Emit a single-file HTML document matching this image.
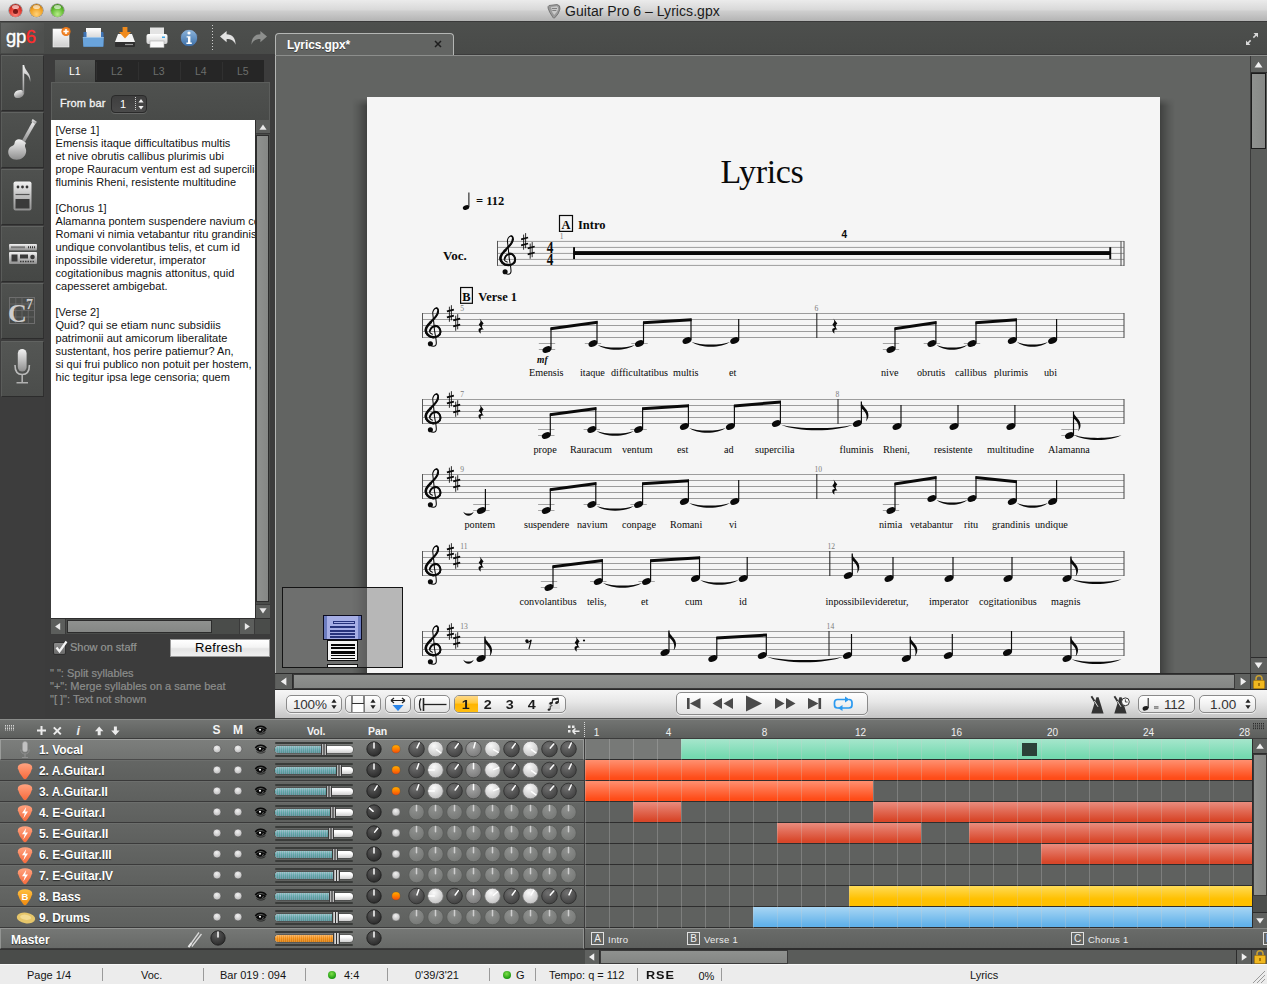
<!DOCTYPE html>
<html lang="en"><head><meta charset="utf-8"><title>Guitar Pro 6 – Lyrics.gpx</title>
<style>
*{box-sizing:border-box;margin:0;padding:0}
html,body{width:1267px;height:984px;overflow:hidden;background:#3c3c3c}
body{position:relative;font-family:"Liberation Sans","DejaVu Sans",sans-serif;font-size:11px;color:#fff}
.a{position:absolute}
svg{position:absolute;overflow:visible}
.t{position:absolute;white-space:pre;line-height:1}
</style></head>
<body>
<div class="a" style="left:0px;top:0px;width:1267px;height:22px;background:linear-gradient(#ebebeb,#d9d9d9 45%,#cdcdcd 55%,#b4b4b4);border-bottom:1px solid #3a3a3a"></div>
<div class="a" style="left:8.5px;top:4px;width:13px;height:13px;border-radius:50%;background:radial-gradient(circle at 50% 78%,#ff8a80 0,#e0362c 55%,#8a1a14 100%);box-shadow:0 0 0 .5px rgba(0,0,0,.45),0 1px 0 rgba(255,255,255,.5)"><div class="a" style="left:3px;top:1px;width:7px;height:4px;border-radius:50%;background:rgba(255,255,255,.6)"></div><div class="a" style="left:4px;top:4.5px;width:5px;height:5px;border-radius:50%;background:rgba(90,8,8,.8)"></div></div>
<div class="a" style="left:29.5px;top:4px;width:13px;height:13px;border-radius:50%;background:radial-gradient(circle at 50% 78%,#ffd27a 0,#f0a020 55%,#9a5a08 100%);box-shadow:0 0 0 .5px rgba(0,0,0,.45),0 1px 0 rgba(255,255,255,.5)"><div class="a" style="left:3px;top:1px;width:7px;height:4px;border-radius:50%;background:rgba(255,255,255,.6)"></div></div>
<div class="a" style="left:50.5px;top:4px;width:13px;height:13px;border-radius:50%;background:radial-gradient(circle at 50% 78%,#b8ec8a 0,#5cb82c 55%,#2c6a10 100%);box-shadow:0 0 0 .5px rgba(0,0,0,.45),0 1px 0 rgba(255,255,255,.5)"><div class="a" style="left:3px;top:1px;width:7px;height:4px;border-radius:50%;background:rgba(255,255,255,.6)"></div></div>
<svg style="left:546px;top:3px" width="16" height="16" viewBox="0 0 16 16"><path d="M3 2.5 L11 1.5 Q14.5 2 14 6 Q13 11 8.5 15 Q7.5 15.5 7 14.5 Q3 9 2 5 Q1.8 3 3 2.5Z" fill="#9a9a9a" stroke="#6a6a6a" stroke-width=".8"/><path d="M5 4 L11 3.3 Q12.5 4 12 6.5 Q11 9.5 8.2 12 Q5.5 9 5 4Z" fill="#c9c9c9"/><path d="M6 5.5 h5 M6.3 7.5 h4" stroke="#777" stroke-width=".9"/></svg>
<div class="t" style="left:565px;top:3px;font-size:14px;color:#1a1a1a;letter-spacing:.05px;line-height:16px">Guitar Pro 6 – Lyrics.gpx</div>
<div class="a" style="left:0px;top:22px;width:1267px;height:32px;background:linear-gradient(#4d4f4d,#484a48)"></div>
<div class="a" style="left:1px;top:23px;width:43px;height:30px;background:linear-gradient(135deg,#646664,#4e504e 70%)"></div>
<div class="t" style="left:6px;top:27px;font-size:18.5px;letter-spacing:-.4px;line-height:20px;color:#fff;-webkit-text-stroke:.35px">gp<span style="color:#ff2d2d">6</span></div>
<svg style="left:50px;top:25px" width="24" height="26" viewBox="50 25 24 26"><defs><linearGradient id="pg" x1="0" y1="0" x2="0" y2="1"><stop offset="0" stop-color="#fff"/><stop offset="1" stop-color="#cfcfcf"/></linearGradient><radialGradient id="og"><stop offset="0" stop-color="#ffb060"/><stop offset="1" stop-color="#e87010"/></radialGradient></defs><rect x="53" y="29" width="16" height="18" fill="url(#pg)" stroke="#f4f4f4" stroke-width=".6"/><circle cx="66" cy="31.5" r="4.6" fill="url(#og)"/><path d="M63.4 31.5h5.2M66 28.9v5.2" stroke="#fff" stroke-width="1.6"/></svg>
<svg style="left:80px;top:25px" width="28" height="26" viewBox="80 25 28 26"><rect x="86" y="28" width="15" height="12" fill="url(#pg)"/><path d="M83.5 32 h3 v9 h14.5 v-9 h2 l.5 1 v13.5 h-20z" fill="#3d73b5"/><path d="M82.8 37.5 h21 l-.6 9.3 h-19.8z" fill="#6aa4dc"/><path d="M82.8 37.5 h21" stroke="#9cc6ee" stroke-width=".8"/></svg>
<svg style="left:112px;top:25px" width="28" height="26" viewBox="112 25 28 26"><path d="M118 34 h14 l3 8 h-20z" fill="#f4f4f4"/><rect x="115" y="42" width="20" height="5" rx="1" fill="#2f2f2f"/><path d="M125 44.5h8" stroke="#999" stroke-width="1.2"/><path d="M122.6 27 h4.8 v5 h3.6 l-6 6.4 l-6 -6.4 h3.6z" fill="#f08a1c"/></svg>
<svg style="left:143px;top:25px" width="28" height="26" viewBox="143 25 28 26"><rect x="150" y="27.5" width="14" height="8" fill="#e4e4e4"/><rect x="146.5" y="34" width="21" height="10" rx="2" fill="url(#pg)"/><rect x="150" y="41" width="14" height="6.5" fill="#fafafa" stroke="#aaa" stroke-width=".6"/><rect x="162" y="36.5" width="3" height="1.5" fill="#3aa6e8"/></svg>
<svg style="left:178px;top:27px" width="22" height="22" viewBox="0 0 22 22"><defs><linearGradient id="ig" x1="0" y1="0" x2="0" y2="1"><stop offset="0" stop-color="#8fb6dc"/><stop offset="1" stop-color="#3a6ea8"/></linearGradient></defs><circle cx="11" cy="11" r="8.7" fill="url(#ig)" stroke="#4a4440" stroke-width=".8"/><circle cx="11" cy="6" r="1.6" fill="#fff"/><path d="M8.6 9.2h3.8v6.4h1.4v1.4H8.4v-1.4h1.6v-5H8.6z" fill="#fff"/></svg>
<div class="a" style="left:212px;top:25px;width:1px;height:26px;background:repeating-linear-gradient(#cfcfcf 0 1px,transparent 1px 3px)"></div>
<svg style="left:218.5px;top:29.5px" width="19" height="17" viewBox="0 0 20 18"><path d="M1 6.8 L8 1 V4.6 C14 4.6 17.5 8.5 17.5 15.5 C15.8 11.5 13 9.6 8 9.6 V13z" fill="#e2e2e2"/></svg>
<svg style="left:248.5px;top:29.5px" width="19" height="17" viewBox="0 0 20 18"><path d="M19 6.8 L12 1 V4.6 C6 4.6 2.5 8.5 2.5 15.5 C4.2 11.5 7 9.6 12 9.6 V13z" fill="#8d8f8d"/></svg>
<svg style="left:1245px;top:32px" width="14" height="14" viewBox="0 0 14 14"><path d="M8.5 1H13V5.5L11.3 3.8 8.9 6.2 7.8 5.1 10.2 2.7zM5.5 13H1V8.5L2.7 10.2 5.1 7.8 6.2 8.9 3.8 11.3z" fill="#d8d8d8"/></svg>
<div class="a" style="left:275px;top:33px;width:179px;height:23px;background:#626462;border:1px solid #b4b6b4;border-bottom:none;border-radius:4px 4px 0 0"></div>
<div class="t" style="left:287px;top:38px;font-size:12px;font-weight:bold;line-height:14px;letter-spacing:-.1px;text-shadow:0 1px 0 rgba(0,0,0,.4)">Lyrics.gpx*</div>
<svg style="left:434px;top:40px" width="8" height="8" viewBox="0 0 8 8"><path d="M1 1L7 7M7 1L1 7" stroke="#1e1e1e" stroke-width="1.5"/></svg>
<div class="a" style="left:0px;top:54px;width:45px;height:664px;background:#3d3d3d"></div>
<div class="a" style="left:1px;top:55px;width:43px;height:56px;background:linear-gradient(#4f514f,#454745);border-top:1px solid #616361;border-left:1px solid #5a5c5a;border-bottom:1px solid #2c2c2c;border-right:1px solid #2f2f2f"></div>
<svg style="left:0;top:54px" width="44" height="57" viewBox="0 0 44 57"><defs><linearGradient id="sg" x1="0" y1="0" x2="0" y2="1"><stop offset="0" stop-color="#f2f2f2"/><stop offset="1" stop-color="#8e8e8e"/></linearGradient></defs><ellipse cx="19" cy="40" rx="5.2" ry="3.8" transform="rotate(-25 19 40)" fill="url(#sg)"/><path d="M22.6 39.5 V11 h1.6 c0.5 6 7.5 8 6 17 c-.6 -6 -4 -8 -6 -8.5 V39.5z" fill="url(#sg)"/></svg>
<div class="a" style="left:1px;top:112px;width:43px;height:56px;background:linear-gradient(#4f514f,#454745);border-top:1px solid #616361;border-left:1px solid #5a5c5a;border-bottom:1px solid #2c2c2c;border-right:1px solid #2f2f2f"></div>
<svg style="left:0;top:111px" width="44" height="57" viewBox="0 0 44 57"><path d="M33.2 9.2 L36.2 11.2 L24.8 31.2 L22 29.5Z" fill="url(#sg)"/><path d="M32.6 8 L36.8 10.8 L35.6 13.2 L31.4 10.4Z" fill="url(#sg)"/><path d="M21.5 28.8 C18.5 27.2 14.6 28.8 14.6 32 C14.6 34 12.6 34.6 11 35.6 C7.4 38 7.4 43.6 10.5 46.6 C13.6 49.6 19.6 49.6 23 46.6 C26 44 27 40 25.5 37 C24.5 35 25 33 26.2 32 Z" fill="url(#sg)"/></svg>
<div class="a" style="left:1px;top:169px;width:43px;height:56px;background:linear-gradient(#4f514f,#454745);border-top:1px solid #616361;border-left:1px solid #5a5c5a;border-bottom:1px solid #2c2c2c;border-right:1px solid #2f2f2f"></div>
<svg style="left:0;top:168px" width="44" height="57" viewBox="0 0 44 57"><rect x="13.5" y="13.5" width="18" height="29" rx="2" fill="url(#sg)"/><rect x="15.5" y="31" width="14" height="9.5" fill="#3a3a3a"/><circle cx="18" cy="19" r="1.4" fill="#333"/><circle cx="22.5" cy="19" r="1.4" fill="#333"/><circle cx="27" cy="19" r="1.4" fill="#333"/><path d="M15.5 26.5h14" stroke="#555" stroke-width="1.2"/></svg>
<div class="a" style="left:1px;top:226px;width:43px;height:56px;background:linear-gradient(#4f514f,#454745);border-top:1px solid #616361;border-left:1px solid #5a5c5a;border-bottom:1px solid #2c2c2c;border-right:1px solid #2f2f2f"></div>
<svg style="left:0;top:225px" width="44" height="57" viewBox="0 0 44 57"><rect x="9" y="19" width="28" height="6.5" rx="1" fill="url(#sg)"/><rect x="9" y="27" width="28" height="12" rx="1" fill="url(#sg)"/><path d="M11.5 22.2h14M28 22.2h7" stroke="#333" stroke-width="2" stroke-dasharray="1 1"/><rect x="11.5" y="29.5" width="6" height="7" fill="#3a3a3a"/><rect x="20" y="29.5" width="8" height="4" fill="#3a3a3a"/><circle cx="32.5" cy="32" r="2.3" fill="#3a3a3a"/><path d="M20 36.5h14" stroke="#3a3a3a" stroke-width="1.6" stroke-dasharray="1.5 1"/></svg>
<div class="a" style="left:1px;top:283px;width:43px;height:56px;background:linear-gradient(#4f514f,#454745);border-top:1px solid #616361;border-left:1px solid #5a5c5a;border-bottom:1px solid #2c2c2c;border-right:1px solid #2f2f2f"></div>
<svg style="left:0;top:282px" width="44" height="57" viewBox="0 0 44 57"><rect x="9.5" y="15.5" width="25" height="26" fill="none" stroke="#6e6e6e"/><path d="M9.5 22h25M9.5 28.5h25M9.5 35h25M15.8 15.5v26M22 15.5v26M28.3 15.5v26" stroke="#6a6a6a" stroke-width=".8"/><text x="8" y="39.5" font-family='"Liberation Serif", "DejaVu Serif", serif' font-weight="bold" font-size="26" fill="#cdcdcd">C</text><text x="26" y="26.5" font-family='"Liberation Serif", "DejaVu Serif", serif' font-weight="bold" font-size="14" fill="#cdcdcd">7</text></svg>
<div class="a" style="left:1px;top:341px;width:43px;height:56px;background:linear-gradient(#545654,#4b4d4b);border-top:1px solid #616361;border-left:1px solid #5a5c5a;border-bottom:1px solid #2c2c2c;border-right:1px solid #2f2f2f"></div>
<svg style="left:0;top:340px" width="44" height="57" viewBox="0 0 44 57"><rect x="17.8" y="9" width="8.8" height="22.5" rx="4.4" fill="url(#sg)"/><path d="M15 25 c0 6.5 3 9.5 7.2 9.5 s7.2 -3 7.2 -9.5" fill="none" stroke="#bcbcbc" stroke-width="1.6"/><path d="M22.2 34.5v8M16.5 42.8h11.5" stroke="#b0b0b0" stroke-width="1.6"/></svg>
<div class="a" style="left:55px;top:60px;width:209px;height:22px;background:#262626"></div>
<div class="a" style="left:55px;top:60px;width:40px;height:22px;background:linear-gradient(#5a5c5a,#4c4e4c)"></div>
<div class="t" style="left:69px;top:64.5px;font-size:10.5px;color:#fff;line-height:12px">L1</div>
<div class="a" style="left:96px;top:62px;width:1px;height:18px;background:#303030"></div>
<div class="t" style="left:111px;top:64.5px;font-size:10.5px;color:#6c6e6c;line-height:12px">L2</div>
<div class="a" style="left:138px;top:62px;width:1px;height:18px;background:#303030"></div>
<div class="t" style="left:153px;top:64.5px;font-size:10.5px;color:#6c6e6c;line-height:12px">L3</div>
<div class="a" style="left:180px;top:62px;width:1px;height:18px;background:#303030"></div>
<div class="t" style="left:195px;top:64.5px;font-size:10.5px;color:#6c6e6c;line-height:12px">L4</div>
<div class="a" style="left:222px;top:62px;width:1px;height:18px;background:#303030"></div>
<div class="t" style="left:237px;top:64.5px;font-size:10.5px;color:#6c6e6c;line-height:12px">L5</div>
<div class="a" style="left:51px;top:82px;width:219px;height:552px;background:linear-gradient(#4f514f,#484a48 40px);border:1px solid #5c5e5c;border-bottom-color:#3a3a3a"></div>
<div class="t" style="left:60px;top:97px;font-size:11px;-webkit-text-stroke:.3px #f4f4f4;letter-spacing:.1px;line-height:13px;color:#f4f4f4">From bar</div>
<div class="a" style="left:111px;top:95px;width:36px;height:18px;background:linear-gradient(#3e3e3e,#4a4a4a);border:1px solid #2a2a2a;border-radius:4px;box-shadow:0 1px 0 rgba(255,255,255,.15)"></div>
<div class="t" style="left:120px;top:98px;font-size:11px;line-height:13px;color:#fff">1</div>
<div class="a" style="left:135px;top:97px;width:1px;height:14px;background:repeating-linear-gradient(#d0d0d0 0 1px,transparent 1px 2px)"></div>
<svg style="left:137px;top:96px" width="8" height="16" viewBox="0 0 8 16"><polygon points="1.4,6.5600000000000005 6.6,6.5600000000000005 4,2.92" fill="#f0f0f0"/><polygon points="1.4,9.94 6.6,9.94 4,13.58" fill="#f0f0f0"/></svg>
<div class="a" style="left:51px;top:120px;width:204px;height:498px;background:#fff;overflow:hidden"><div style="position:absolute;left:4.5px;top:3.5px;font-size:11px;line-height:13px;color:#111;white-space:pre;letter-spacing:.04px">[Verse 1]
Emensis itaque difficultatibus multis
et nive obrutis callibus plurimis ubi
prope Rauracum ventum est ad supercilia
fluminis Rheni, resistente multitudine

[Chorus 1]
Alamanna pontem suspendere navium conpage
Romani vi nimia vetabantur ritu grandinis
undique convolantibus telis, et cum id
inpossibile videretur, imperator
cogitationibus magnis attonitus, quid
capesseret ambigebat.

[Verse 2]
Quid? qui se etiam nunc subsidiis
patrimonii aut amicorum liberalitate
sustentant, hos perire patiemur? An,
si qui frui publico non potuit per hostem,
hic tegitur ipsa lege censoria; quem</div></div>
<div class="a" style="left:255px;top:120px;width:15px;height:498px;background:#4a4c4a;border-left:1px solid #2e2e2e"></div>
<div class="a" style="left:256px;top:120px;width:14px;height:14px;background:#5c5e5c;border-bottom:1px solid #3a3a3a"></div>
<div class="a" style="left:256px;top:135px;width:13px;height:467px;background:linear-gradient(90deg,#8f918f,#858785);border:1px solid #2c2c2c"></div>
<div class="a" style="left:256px;top:604px;width:14px;height:14px;background:#5c5e5c;border-top:1px solid #3a3a3a"></div>
<svg style="left:256px;top:120px" width="14" height="498" viewBox="0 0 14 498"><polygon points="3.4,9.66 10.6,9.66 7,4.619999999999999" fill="#eaeaea"/><polygon points="3.4,488.34 10.6,488.34 7,493.38" fill="#eaeaea"/></svg>
<div class="a" style="left:51px;top:618px;width:219px;height:16px;background:#4a4c4a;border-top:1px solid #2e2e2e"></div>
<div class="a" style="left:51px;top:619px;width:15px;height:15px;background:#5c5e5c;border-right:1px solid #3a3a3a"></div>
<div class="a" style="left:67px;top:620px;width:145px;height:13px;background:linear-gradient(#8f918f,#858785);border:1px solid #2c2c2c"></div>
<div class="a" style="left:239px;top:619px;width:16px;height:15px;background:#5c5e5c;border-left:1px solid #3a3a3a;border-right:1px solid #3a3a3a"></div>
<svg style="left:51px;top:619px" width="204" height="15" viewBox="0 0 204 15"><polygon points="9.16,3.9 9.16,11.1 4.119999999999999,7.5" fill="#eaeaea"/><polygon points="193.84,3.9 193.84,11.1 198.88,7.5" fill="#eaeaea"/></svg>
<div class="a" style="left:53px;top:642px;width:13px;height:13px;background:linear-gradient(#8a8a8a,#6a6a6a);border:1px solid #2e2e2e;border-radius:2px"></div>
<svg style="left:53px;top:638px" width="18" height="18" viewBox="0 0 18 18"><path d="M3.5 9.5 L6.5 13.5 L13.5 3.5" fill="none" stroke="#f4f4f4" stroke-width="2.2"/></svg>
<div class="t" style="left:70px;top:641px;font-size:11px;line-height:13px;color:#939593;-webkit-text-stroke:.2px #939593">Show on staff</div>
<div class="a" style="left:170px;top:639px;width:100px;height:18px;background:linear-gradient(#ffffff,#f4f4f4 45%,#e4e4e4 55%,#f0f0f0);border:1px solid #9a9a9a"></div>
<div class="t" style="left:195px;top:640px;font-size:13px;line-height:16px;color:#000;letter-spacing:.3px">Refresh</div>
<div class="t" style="left:50px;top:667px;font-size:11px;line-height:13px;color:#8c8e8c;-webkit-text-stroke:.2px #8c8e8c">" ": Split syllables</div>
<div class="t" style="left:50px;top:680px;font-size:11px;line-height:13px;color:#8c8e8c;-webkit-text-stroke:.2px #8c8e8c">"+": Merge syllables on a same beat</div>
<div class="t" style="left:50px;top:693px;font-size:11px;line-height:13px;color:#8c8e8c;-webkit-text-stroke:.2px #8c8e8c">"[ ]": Text not shown</div>
<div class="a" style="left:275px;top:55px;width:977px;height:618px;background:#626462;border-left:1px solid #b4b6b4;border-top:1px solid #8c8e8c"></div>
<div class="a" style="left:454px;top:55px;width:813px;height:1px;background:#8c8e8c"></div>
<div class="a" style="left:352px;top:98px;width:15px;height:575px;background:linear-gradient(90deg,rgba(0,0,0,0),rgba(0,0,0,.1) 40%,rgba(0,0,0,.34));-webkit-mask-image:linear-gradient(transparent,#000 8px);mask-image:linear-gradient(transparent,#000 8px)"></div>
<div class="a" style="left:1160px;top:98px;width:15px;height:575px;background:linear-gradient(270deg,rgba(0,0,0,0),rgba(0,0,0,.1) 40%,rgba(0,0,0,.34));-webkit-mask-image:linear-gradient(transparent,#000 8px);mask-image:linear-gradient(transparent,#000 8px)"></div>
<div class="a" style="left:367px;top:97px;width:793px;height:576px;background:#f5f5f5"></div>
<svg style="left:367px;top:97px" width="793" height="576" viewBox="367 97 793 576" font-family='"Liberation Serif", "DejaVu Serif", serif' fill="#0a0a0a">
<text x="720.5" y="183" font-size="34" letter-spacing="-.35">Lyrics</text>
<ellipse cx="466" cy="207.5" rx="3.3" ry="2.3" transform="rotate(-24 466 207.5)" fill="#0a0a0a"/><path d="M468.9 207V192.5" stroke="#0a0a0a" stroke-width="1"/>
<text x="476" y="205" font-size="12.5" font-weight="bold">= 112</text>
<path d="M497.5 241.4H1124" stroke="#9c9c9c" stroke-width="1"/><path d="M497.5 247.4H1124" stroke="#9c9c9c" stroke-width="1"/><path d="M497.5 253.4H1124" stroke="#9c9c9c" stroke-width="1"/><path d="M497.5 259.4H1124" stroke="#9c9c9c" stroke-width="1"/><path d="M497.5 265.4H1124" stroke="#9c9c9c" stroke-width="1"/><path d="M497.5 240.9V265.9" stroke="#555" stroke-width="1"/>
<g transform="translate(509.4 241.4)" fill="none" stroke="#0a0a0a" stroke-linecap="round"><path d="M -2.2 20.7 C -4.5 20 -5.6 18.5 -5 17 C -4.3 14 -1.5 12.5 0.8 12.5 C 4 12.5 6.2 15.5 6.1 18.8 C 6 22 2.5 24.2 -1.6 24 C -6.5 23.8 -9.6 20.5 -9.5 16.9 C -9.4 13.5 -7 11.5 -4.5 9.2 C -1 6 3.6 2 3.6 -2 C 3.6 -4.5 2.8 -5.4 1.6 -5.4 C -0.5 -5.4 -2.4 -2 -1.9 0.5 C -1.5 4 -0.9 8 -0.2 16.9 L 1.3 25.8 L 1.6 28.9 C 1.9 31.5 0.5 33 -1.5 32.8 C -2.6 32.7 -3.4 32.2 -4 31.6" stroke-width="1.05"/><path d="M -1.6 24 C -6.5 23.8 -9.6 20.5 -9.5 16.9 C -9.4 13.5 -7 11.5 -4.5 9.2" stroke-width="2.5" transform="translate(.6 -.3)"/><path d="M 0.8 12.5 C 4 12.5 6.2 15.5 6.1 18.8 C 6 22 2.5 24.2 -1.6 24" stroke-width="2" transform="translate(-.4 -.3)"/><path d="M -5 17 C -4.3 14 -1.5 12.5 0.8 12.5" stroke-width="1.7" transform="translate(.3 .3)"/><path d="M -4.5 9.2 C -1 6 3.6 2 3.6 -2" stroke-width="2.1" transform="translate(-.3 0)"/><path d="M 3.6 -2 C 3.6 -4.5 2.8 -5.4 1.6 -5.4" stroke-width="1.5"/><circle cx="-4.3" cy="30.3" r="2.55" fill="#0a0a0a" stroke="none"/></g><g transform="translate(524.6 241.4)" stroke="#0a0a0a"><path d="M-1 -6.8V8.3M1 -8.3V6.8" stroke-width=".85"/><path d="M-3.5 -2.1L3.5 -3.9M-3.5 3.9L3.5 2.1" stroke-width="1.75"/></g><g transform="translate(531.2 250.4)" stroke="#0a0a0a"><path d="M-1 -6.8V8.3M1 -8.3V6.8" stroke-width=".85"/><path d="M-3.5 -2.1L3.5 -3.9M-3.5 3.9L3.5 2.1" stroke-width="1.75"/></g>
<text x="546.8" y="252.9" font-size="17" font-weight="bold" textLength="6.6" lengthAdjust="spacingAndGlyphs">4</text><text x="546.8" y="264.9" font-size="17" font-weight="bold" textLength="6.6" lengthAdjust="spacingAndGlyphs">4</text>
<rect x="559.5" y="215.5" width="13" height="15.9" fill="none" stroke="#0a0a0a" stroke-width="1.2"/><text x="561.6" y="228.7" font-size="12.4" font-weight="bold">A</text>
<text x="578" y="228.7" font-size="12.5" font-weight="bold">Intro</text>
<text x="559.8" y="238.7" font-size="7.6" fill="#7c7c7c">1</text>
<text x="443" y="260" font-size="13" font-weight="bold">Voc.</text>
<rect x="573.5" y="251.1" width="537" height="3.9"/><rect x="573.1" y="247.2" width="1.9" height="11.9"/><rect x="1109.3" y="247.2" width="1.9" height="11.9"/>
<text x="841.5" y="237.5" font-family='"Liberation Sans", "DejaVu Sans", sans-serif' font-size="10" font-weight="bold">4</text>
<path d="M1121 240.9V265.9" stroke="#555" stroke-width="1.1"/><path d="M1124 240.9V265.9" stroke="#555" stroke-width="1.1"/>
<rect x="460.6" y="287.5" width="11.8" height="15.8" fill="none" stroke="#0a0a0a" stroke-width="1.2"/><text x="462.3" y="300.7" font-size="12.4" font-weight="bold">B</text>
<text x="478.3" y="300.7" font-size="12.5" font-weight="bold">Verse 1</text>
<path d="M422.5 313.5H1124" stroke="#9c9c9c" stroke-width="1"/><path d="M422.5 319.5H1124" stroke="#9c9c9c" stroke-width="1"/><path d="M422.5 325.5H1124" stroke="#9c9c9c" stroke-width="1"/><path d="M422.5 331.5H1124" stroke="#9c9c9c" stroke-width="1"/><path d="M422.5 337.5H1124" stroke="#9c9c9c" stroke-width="1"/><path d="M422.5 313V338" stroke="#555" stroke-width="1"/><g transform="translate(434.7 313.5)" fill="none" stroke="#0a0a0a" stroke-linecap="round"><path d="M -2.2 20.7 C -4.5 20 -5.6 18.5 -5 17 C -4.3 14 -1.5 12.5 0.8 12.5 C 4 12.5 6.2 15.5 6.1 18.8 C 6 22 2.5 24.2 -1.6 24 C -6.5 23.8 -9.6 20.5 -9.5 16.9 C -9.4 13.5 -7 11.5 -4.5 9.2 C -1 6 3.6 2 3.6 -2 C 3.6 -4.5 2.8 -5.4 1.6 -5.4 C -0.5 -5.4 -2.4 -2 -1.9 0.5 C -1.5 4 -0.9 8 -0.2 16.9 L 1.3 25.8 L 1.6 28.9 C 1.9 31.5 0.5 33 -1.5 32.8 C -2.6 32.7 -3.4 32.2 -4 31.6" stroke-width="1.05"/><path d="M -1.6 24 C -6.5 23.8 -9.6 20.5 -9.5 16.9 C -9.4 13.5 -7 11.5 -4.5 9.2" stroke-width="2.5" transform="translate(.6 -.3)"/><path d="M 0.8 12.5 C 4 12.5 6.2 15.5 6.1 18.8 C 6 22 2.5 24.2 -1.6 24" stroke-width="2" transform="translate(-.4 -.3)"/><path d="M -5 17 C -4.3 14 -1.5 12.5 0.8 12.5" stroke-width="1.7" transform="translate(.3 .3)"/><path d="M -4.5 9.2 C -1 6 3.6 2 3.6 -2" stroke-width="2.1" transform="translate(-.3 0)"/><path d="M 3.6 -2 C 3.6 -4.5 2.8 -5.4 1.6 -5.4" stroke-width="1.5"/><circle cx="-4.3" cy="30.3" r="2.55" fill="#0a0a0a" stroke="none"/></g><g transform="translate(450.4 313.5)" stroke="#0a0a0a"><path d="M-1 -6.8V8.3M1 -8.3V6.8" stroke-width=".85"/><path d="M-3.5 -2.1L3.5 -3.9M-3.5 3.9L3.5 2.1" stroke-width="1.75"/></g><g transform="translate(456.7 322.5)" stroke="#0a0a0a"><path d="M-1 -6.8V8.3M1 -8.3V6.8" stroke-width=".85"/><path d="M-3.5 -2.1L3.5 -3.9M-3.5 3.9L3.5 2.1" stroke-width="1.75"/></g><text x="460.3" y="310.8" font-size="7.6" fill="#7c7c7c">5</text><path d="M1124 313V338" stroke="#555" stroke-width="1.1"/><path transform="translate(481 326)" d="M-1.3 -7.5 L2.6 -2.6 C0.6 -0.8 0.4 1 2.8 3.6 C0.6 3 -1.4 3.6 0 7.6 C-3.2 5.6 -3.4 1.6 0.2 1.9 L-2.3 -1.6 C-0.2 -3.4 0 -5.2 -1.3 -7.5Z" fill="#0a0a0a"/><path d="M538.8 343.5H555.2" stroke="#a4a4a4" stroke-width="1"/><path d="M538.8 349.5H555.2" stroke="#a4a4a4" stroke-width="1"/><ellipse cx="547" cy="349.5" rx="4.7" ry="3.1" transform="rotate(-24 547 349.5)" fill="#0a0a0a"/><path d="M584.8 343.5H601.2" stroke="#a4a4a4" stroke-width="1"/><ellipse cx="593" cy="343.5" rx="4.7" ry="3.1" transform="rotate(-24 593 343.5)" fill="#0a0a0a"/><polygon points="550.5,327.3 597.6,320.8 597.6,323.8 550.5,330.3" fill="#0a0a0a"/><path d="M551 348.5V327.8" stroke="#0a0a0a" stroke-width="1.15"/><path d="M597 342.5V321.3" stroke="#0a0a0a" stroke-width="1.15"/><path d="M631.3 343.5H647.7" stroke="#a4a4a4" stroke-width="1"/><ellipse cx="639.5" cy="343.5" rx="4.7" ry="3.1" transform="rotate(-24 639.5 343.5)" fill="#0a0a0a"/><ellipse cx="687" cy="340.5" rx="4.7" ry="3.1" transform="rotate(-24 687 340.5)" fill="#0a0a0a"/><polygon points="643,321.3 691.6,318.2 691.6,321.2 643,324.3" fill="#0a0a0a"/><path d="M643.5 342.5V321.8" stroke="#0a0a0a" stroke-width="1.15"/><path d="M691 339.5V318.7" stroke="#0a0a0a" stroke-width="1.15"/><ellipse cx="734.7" cy="340.5" rx="4.7" ry="3.1" transform="rotate(-24 734.7 340.5)" fill="#0a0a0a"/><path d="M738.7 339.5V319" stroke="#0a0a0a" stroke-width="1.15"/><path d="M597.6 344.7 C605.806 351.365 626.694 351.365 634.9 344.7 C626.694 348.5657 605.806 348.5657 597.6 344.7Z" fill="#0a0a0a"/><path d="M691.6 341.7 C700.07 348.365 721.63 348.365 730.1 341.7 C721.63 345.5657 700.07 345.5657 691.6 341.7Z" fill="#0a0a0a"/><path d="M816.8 313V338" stroke="#2a2a2a" stroke-width="1.1"/><text x="814.4" y="310.6" font-size="7.6" fill="#7c7c7c">6</text><path transform="translate(834.7 326)" d="M-1.3 -7.5 L2.6 -2.6 C0.6 -0.8 0.4 1 2.8 3.6 C0.6 3 -1.4 3.6 0 7.6 C-3.2 5.6 -3.4 1.6 0.2 1.9 L-2.3 -1.6 C-0.2 -3.4 0 -5.2 -1.3 -7.5Z" fill="#0a0a0a"/><path d="M882.8 343.5H899.2" stroke="#a4a4a4" stroke-width="1"/><path d="M882.8 349.5H899.2" stroke="#a4a4a4" stroke-width="1"/><ellipse cx="891" cy="349.5" rx="4.7" ry="3.1" transform="rotate(-24 891 349.5)" fill="#0a0a0a"/><path d="M923.6999999999999 343.5H940.1" stroke="#a4a4a4" stroke-width="1"/><ellipse cx="931.9" cy="343.5" rx="4.7" ry="3.1" transform="rotate(-24 931.9 343.5)" fill="#0a0a0a"/><polygon points="894.5,327.3 936.5,321 936.5,324 894.5,330.3" fill="#0a0a0a"/><path d="M895 348.5V327.8" stroke="#0a0a0a" stroke-width="1.15"/><path d="M935.9 342.5V321.5" stroke="#0a0a0a" stroke-width="1.15"/><path d="M963.8 343.5H980.2" stroke="#a4a4a4" stroke-width="1"/><ellipse cx="972" cy="343.5" rx="4.7" ry="3.1" transform="rotate(-24 972 343.5)" fill="#0a0a0a"/><ellipse cx="1012.3" cy="340.5" rx="4.7" ry="3.1" transform="rotate(-24 1012.3 340.5)" fill="#0a0a0a"/><polygon points="975.5,321.3 1016.9,318.2 1016.9,321.2 975.5,324.3" fill="#0a0a0a"/><path d="M976 342.5V321.8" stroke="#0a0a0a" stroke-width="1.15"/><path d="M1016.3 339.5V318.7" stroke="#0a0a0a" stroke-width="1.15"/><ellipse cx="1052.6" cy="340.5" rx="4.7" ry="3.1" transform="rotate(-24 1052.6 340.5)" fill="#0a0a0a"/><path d="M1056.6 339.5V319" stroke="#0a0a0a" stroke-width="1.15"/><path d="M936.5 344.7 C943.298 351.365 960.602 351.365 967.4 344.7 C960.602 348.5657 943.298 348.5657 936.5 344.7Z" fill="#0a0a0a"/><path d="M1016.9 341.7 C1023.742 348.365 1041.158 348.365 1048 341.7 C1041.158 345.5657 1023.742 345.5657 1016.9 341.7Z" fill="#0a0a0a"/><text x="537" y="363" font-size="9.5" font-weight="bold" font-style="italic">mf</text><text x="529" y="375.5" font-size="10.2">Emensis</text><text x="580" y="375.5" font-size="10.2">itaque</text><text x="611" y="375.5" font-size="10.2">difficultatibus</text><text x="673" y="375.5" font-size="10.2">multis</text><text x="729" y="375.5" font-size="10.2">et</text><text x="881" y="375.5" font-size="10.2">nive</text><text x="917" y="375.5" font-size="10.2">obrutis</text><text x="955" y="375.5" font-size="10.2">callibus</text><text x="994" y="375.5" font-size="10.2">plurimis</text><text x="1044" y="375.5" font-size="10.2">ubi</text>
<path d="M422.5 399.5H1124" stroke="#9c9c9c" stroke-width="1"/><path d="M422.5 405.5H1124" stroke="#9c9c9c" stroke-width="1"/><path d="M422.5 411.5H1124" stroke="#9c9c9c" stroke-width="1"/><path d="M422.5 417.5H1124" stroke="#9c9c9c" stroke-width="1"/><path d="M422.5 423.5H1124" stroke="#9c9c9c" stroke-width="1"/><path d="M422.5 399V424" stroke="#555" stroke-width="1"/><g transform="translate(434.7 399.5)" fill="none" stroke="#0a0a0a" stroke-linecap="round"><path d="M -2.2 20.7 C -4.5 20 -5.6 18.5 -5 17 C -4.3 14 -1.5 12.5 0.8 12.5 C 4 12.5 6.2 15.5 6.1 18.8 C 6 22 2.5 24.2 -1.6 24 C -6.5 23.8 -9.6 20.5 -9.5 16.9 C -9.4 13.5 -7 11.5 -4.5 9.2 C -1 6 3.6 2 3.6 -2 C 3.6 -4.5 2.8 -5.4 1.6 -5.4 C -0.5 -5.4 -2.4 -2 -1.9 0.5 C -1.5 4 -0.9 8 -0.2 16.9 L 1.3 25.8 L 1.6 28.9 C 1.9 31.5 0.5 33 -1.5 32.8 C -2.6 32.7 -3.4 32.2 -4 31.6" stroke-width="1.05"/><path d="M -1.6 24 C -6.5 23.8 -9.6 20.5 -9.5 16.9 C -9.4 13.5 -7 11.5 -4.5 9.2" stroke-width="2.5" transform="translate(.6 -.3)"/><path d="M 0.8 12.5 C 4 12.5 6.2 15.5 6.1 18.8 C 6 22 2.5 24.2 -1.6 24" stroke-width="2" transform="translate(-.4 -.3)"/><path d="M -5 17 C -4.3 14 -1.5 12.5 0.8 12.5" stroke-width="1.7" transform="translate(.3 .3)"/><path d="M -4.5 9.2 C -1 6 3.6 2 3.6 -2" stroke-width="2.1" transform="translate(-.3 0)"/><path d="M 3.6 -2 C 3.6 -4.5 2.8 -5.4 1.6 -5.4" stroke-width="1.5"/><circle cx="-4.3" cy="30.3" r="2.55" fill="#0a0a0a" stroke="none"/></g><g transform="translate(450.4 399.5)" stroke="#0a0a0a"><path d="M-1 -6.8V8.3M1 -8.3V6.8" stroke-width=".85"/><path d="M-3.5 -2.1L3.5 -3.9M-3.5 3.9L3.5 2.1" stroke-width="1.75"/></g><g transform="translate(456.7 408.5)" stroke="#0a0a0a"><path d="M-1 -6.8V8.3M1 -8.3V6.8" stroke-width=".85"/><path d="M-3.5 -2.1L3.5 -3.9M-3.5 3.9L3.5 2.1" stroke-width="1.75"/></g><text x="460.3" y="396.8" font-size="7.6" fill="#7c7c7c">7</text><path d="M1124 399V424" stroke="#555" stroke-width="1.1"/><path transform="translate(481 412)" d="M-1.3 -7.5 L2.6 -2.6 C0.6 -0.8 0.4 1 2.8 3.6 C0.6 3 -1.4 3.6 0 7.6 C-3.2 5.6 -3.4 1.6 0.2 1.9 L-2.3 -1.6 C-0.2 -3.4 0 -5.2 -1.3 -7.5Z" fill="#0a0a0a"/><path d="M538.0999999999999 429.5H554.5" stroke="#a4a4a4" stroke-width="1"/><path d="M538.0999999999999 435.5H554.5" stroke="#a4a4a4" stroke-width="1"/><ellipse cx="546.3" cy="435.5" rx="4.7" ry="3.1" transform="rotate(-24 546.3 435.5)" fill="#0a0a0a"/><path d="M583.5999999999999 429.5H600" stroke="#a4a4a4" stroke-width="1"/><ellipse cx="591.8" cy="429.5" rx="4.7" ry="3.1" transform="rotate(-24 591.8 429.5)" fill="#0a0a0a"/><polygon points="549.8,413.2 596.4,407 596.4,410 549.8,416.2" fill="#0a0a0a"/><path d="M550.3 434.5V413.7" stroke="#0a0a0a" stroke-width="1.15"/><path d="M595.8 428.5V407.5" stroke="#0a0a0a" stroke-width="1.15"/><path d="M630.4 429.5H646.8000000000001" stroke="#a4a4a4" stroke-width="1"/><ellipse cx="638.6" cy="429.5" rx="4.7" ry="3.1" transform="rotate(-24 638.6 429.5)" fill="#0a0a0a"/><ellipse cx="684.4" cy="426.5" rx="4.7" ry="3.1" transform="rotate(-24 684.4 426.5)" fill="#0a0a0a"/><polygon points="642.1,407.3 689,404.2 689,407.2 642.1,410.3" fill="#0a0a0a"/><path d="M642.6 428.5V407.8" stroke="#0a0a0a" stroke-width="1.15"/><path d="M688.4 425.5V404.7" stroke="#0a0a0a" stroke-width="1.15"/><ellipse cx="730.4" cy="426.5" rx="4.7" ry="3.1" transform="rotate(-24 730.4 426.5)" fill="#0a0a0a"/><ellipse cx="776.4" cy="423.5" rx="4.7" ry="3.1" transform="rotate(-24 776.4 423.5)" fill="#0a0a0a"/><polygon points="733.9,404.5 781,400.5 781,403.5 733.9,407.5" fill="#0a0a0a"/><path d="M734.4 425.5V405" stroke="#0a0a0a" stroke-width="1.15"/><path d="M780.4 422.5V401" stroke="#0a0a0a" stroke-width="1.15"/><path d="M596.4 430.7 C604.672 437.365 625.728 437.365 634 430.7 C625.728 434.5657 604.672 434.5657 596.4 430.7Z" fill="#0a0a0a"/><path d="M689 427.7 C697.096 434.365 717.704 434.365 725.8 427.7 C717.704 431.5657 697.096 431.5657 689 427.7Z" fill="#0a0a0a"/><path d="M781 424.7 C796.7959999999999 432.0315 837.004 432.0315 852.8 424.7 C837.004 429.2322 796.7959999999999 429.2322 781 424.7Z" fill="#0a0a0a"/><path d="M838 399V424" stroke="#2a2a2a" stroke-width="1.1"/><text x="835.6" y="396.6" font-size="7.6" fill="#7c7c7c">8</text><ellipse cx="857.4" cy="423.5" rx="4.7" ry="3.1" transform="rotate(-24 857.4 423.5)" fill="#0a0a0a"/><path d="M861.4 422.5V401.5" stroke="#0a0a0a" stroke-width="1.15"/><path d="M860.9 401.5 C861.9 406.5 869 409.5 868.4 415.5 C868.4 418 867.1999999999999 420 866 421.3 C868 415.5 865.4 411.5 860.9 408Z" fill="#0a0a0a"/><ellipse cx="897" cy="426.5" rx="4.7" ry="3.1" transform="rotate(-24 897 426.5)" fill="#0a0a0a"/><path d="M901 425.5V405" stroke="#0a0a0a" stroke-width="1.15"/><ellipse cx="954" cy="426.5" rx="4.7" ry="3.1" transform="rotate(-24 954 426.5)" fill="#0a0a0a"/><path d="M958 425.5V405" stroke="#0a0a0a" stroke-width="1.15"/><ellipse cx="1010.9" cy="426.5" rx="4.7" ry="3.1" transform="rotate(-24 1010.9 426.5)" fill="#0a0a0a"/><path d="M1014.9 425.5V405" stroke="#0a0a0a" stroke-width="1.15"/><path d="M1061.3 429.5H1077.7" stroke="#a4a4a4" stroke-width="1"/><path d="M1061.3 435.5H1077.7" stroke="#a4a4a4" stroke-width="1"/><ellipse cx="1069.5" cy="435.5" rx="4.7" ry="3.1" transform="rotate(-24 1069.5 435.5)" fill="#0a0a0a"/><path d="M1073.5 434.5V411.5" stroke="#0a0a0a" stroke-width="1.15"/><path d="M1073 411.5 C1074 416.5 1081.1 419.5 1080.5 425.5 C1080.5 428 1079.3 430 1078.1 431.3 C1080.1 425.5 1077.5 421.5 1073 418Z" fill="#0a0a0a"/><path d="M1074 435.1 C1084.45 441.76500000000004 1111.05 441.76500000000004 1121.5 435.1 C1111.05 438.9657 1084.45 438.9657 1074 435.1Z" fill="#0a0a0a"/><text x="533.5" y="452.5" font-size="10.2">prope</text><text x="570" y="452.5" font-size="10.2">Rauracum</text><text x="622" y="452.5" font-size="10.2">ventum</text><text x="677" y="452.5" font-size="10.2">est</text><text x="724" y="452.5" font-size="10.2">ad</text><text x="755" y="452.5" font-size="10.2">supercilia</text><text x="839.5" y="452.5" font-size="10.2">fluminis</text><text x="883" y="452.5" font-size="10.2">Rheni,</text><text x="934" y="452.5" font-size="10.2">resistente</text><text x="987" y="452.5" font-size="10.2">multitudine</text><text x="1048" y="452.5" font-size="10.2">Alamanna</text>
<path d="M422.5 474.5H1124" stroke="#9c9c9c" stroke-width="1"/><path d="M422.5 480.5H1124" stroke="#9c9c9c" stroke-width="1"/><path d="M422.5 486.5H1124" stroke="#9c9c9c" stroke-width="1"/><path d="M422.5 492.5H1124" stroke="#9c9c9c" stroke-width="1"/><path d="M422.5 498.5H1124" stroke="#9c9c9c" stroke-width="1"/><path d="M422.5 474V499" stroke="#555" stroke-width="1"/><g transform="translate(434.7 474.5)" fill="none" stroke="#0a0a0a" stroke-linecap="round"><path d="M -2.2 20.7 C -4.5 20 -5.6 18.5 -5 17 C -4.3 14 -1.5 12.5 0.8 12.5 C 4 12.5 6.2 15.5 6.1 18.8 C 6 22 2.5 24.2 -1.6 24 C -6.5 23.8 -9.6 20.5 -9.5 16.9 C -9.4 13.5 -7 11.5 -4.5 9.2 C -1 6 3.6 2 3.6 -2 C 3.6 -4.5 2.8 -5.4 1.6 -5.4 C -0.5 -5.4 -2.4 -2 -1.9 0.5 C -1.5 4 -0.9 8 -0.2 16.9 L 1.3 25.8 L 1.6 28.9 C 1.9 31.5 0.5 33 -1.5 32.8 C -2.6 32.7 -3.4 32.2 -4 31.6" stroke-width="1.05"/><path d="M -1.6 24 C -6.5 23.8 -9.6 20.5 -9.5 16.9 C -9.4 13.5 -7 11.5 -4.5 9.2" stroke-width="2.5" transform="translate(.6 -.3)"/><path d="M 0.8 12.5 C 4 12.5 6.2 15.5 6.1 18.8 C 6 22 2.5 24.2 -1.6 24" stroke-width="2" transform="translate(-.4 -.3)"/><path d="M -5 17 C -4.3 14 -1.5 12.5 0.8 12.5" stroke-width="1.7" transform="translate(.3 .3)"/><path d="M -4.5 9.2 C -1 6 3.6 2 3.6 -2" stroke-width="2.1" transform="translate(-.3 0)"/><path d="M 3.6 -2 C 3.6 -4.5 2.8 -5.4 1.6 -5.4" stroke-width="1.5"/><circle cx="-4.3" cy="30.3" r="2.55" fill="#0a0a0a" stroke="none"/></g><g transform="translate(450.4 474.5)" stroke="#0a0a0a"><path d="M-1 -6.8V8.3M1 -8.3V6.8" stroke-width=".85"/><path d="M-3.5 -2.1L3.5 -3.9M-3.5 3.9L3.5 2.1" stroke-width="1.75"/></g><g transform="translate(456.7 483.5)" stroke="#0a0a0a"><path d="M-1 -6.8V8.3M1 -8.3V6.8" stroke-width=".85"/><path d="M-3.5 -2.1L3.5 -3.9M-3.5 3.9L3.5 2.1" stroke-width="1.75"/></g><text x="460.3" y="471.8" font-size="7.6" fill="#7c7c7c">9</text><path d="M1124 474V499" stroke="#555" stroke-width="1.1"/><path d="M463.2 511.7 C465.532 517.032 471.468 517.032 473.8 511.7 C471.468 514.2327 465.532 514.2327 463.2 511.7Z" fill="#0a0a0a"/><path d="M473.2 504.5H489.59999999999997" stroke="#a4a4a4" stroke-width="1"/><path d="M473.2 510.5H489.59999999999997" stroke="#a4a4a4" stroke-width="1"/><ellipse cx="481.4" cy="510.5" rx="4.7" ry="3.1" transform="rotate(-24 481.4 510.5)" fill="#0a0a0a"/><path d="M485.4 509.5V489" stroke="#0a0a0a" stroke-width="1.15"/><path d="M538.0999999999999 504.5H554.5" stroke="#a4a4a4" stroke-width="1"/><path d="M538.0999999999999 510.5H554.5" stroke="#a4a4a4" stroke-width="1"/><ellipse cx="546.3" cy="510.5" rx="4.7" ry="3.1" transform="rotate(-24 546.3 510.5)" fill="#0a0a0a"/><path d="M583.5999999999999 504.5H600" stroke="#a4a4a4" stroke-width="1"/><ellipse cx="591.8" cy="504.5" rx="4.7" ry="3.1" transform="rotate(-24 591.8 504.5)" fill="#0a0a0a"/><polygon points="549.8,488.2 596.4,482 596.4,485 549.8,491.2" fill="#0a0a0a"/><path d="M550.3 509.5V488.7" stroke="#0a0a0a" stroke-width="1.15"/><path d="M595.8 503.5V482.5" stroke="#0a0a0a" stroke-width="1.15"/><path d="M630.4 504.5H646.8000000000001" stroke="#a4a4a4" stroke-width="1"/><ellipse cx="638.6" cy="504.5" rx="4.7" ry="3.1" transform="rotate(-24 638.6 504.5)" fill="#0a0a0a"/><ellipse cx="684.4" cy="501.5" rx="4.7" ry="3.1" transform="rotate(-24 684.4 501.5)" fill="#0a0a0a"/><polygon points="642.1,482.3 689,479.2 689,482.2 642.1,485.3" fill="#0a0a0a"/><path d="M642.6 503.5V482.8" stroke="#0a0a0a" stroke-width="1.15"/><path d="M688.4 500.5V479.7" stroke="#0a0a0a" stroke-width="1.15"/><ellipse cx="734.7" cy="501.5" rx="4.7" ry="3.1" transform="rotate(-24 734.7 501.5)" fill="#0a0a0a"/><path d="M738.7 500.5V480" stroke="#0a0a0a" stroke-width="1.15"/><path d="M596.4 505.7 C604.672 512.365 625.728 512.365 634 505.7 C625.728 509.5657 604.672 509.5657 596.4 505.7Z" fill="#0a0a0a"/><path d="M689 502.7 C698.042 509.365 721.058 509.365 730.1 502.7 C721.058 506.5657 698.042 506.5657 689 502.7Z" fill="#0a0a0a"/><path d="M816.8 474V499" stroke="#2a2a2a" stroke-width="1.1"/><text x="814.4" y="471.6" font-size="7.6" fill="#7c7c7c">10</text><path transform="translate(834.7 487)" d="M-1.3 -7.5 L2.6 -2.6 C0.6 -0.8 0.4 1 2.8 3.6 C0.6 3 -1.4 3.6 0 7.6 C-3.2 5.6 -3.4 1.6 0.2 1.9 L-2.3 -1.6 C-0.2 -3.4 0 -5.2 -1.3 -7.5Z" fill="#0a0a0a"/><path d="M882.8 504.5H899.2" stroke="#a4a4a4" stroke-width="1"/><path d="M882.8 510.5H899.2" stroke="#a4a4a4" stroke-width="1"/><ellipse cx="891" cy="510.5" rx="4.7" ry="3.1" transform="rotate(-24 891 510.5)" fill="#0a0a0a"/><ellipse cx="931.9" cy="498.5" rx="4.7" ry="3.1" transform="rotate(-24 931.9 498.5)" fill="#0a0a0a"/><polygon points="894.5,482.5 936.5,476 936.5,479 894.5,485.5" fill="#0a0a0a"/><path d="M895 509.5V483" stroke="#0a0a0a" stroke-width="1.15"/><path d="M935.9 497.5V476.5" stroke="#0a0a0a" stroke-width="1.15"/><ellipse cx="972" cy="498.5" rx="4.7" ry="3.1" transform="rotate(-24 972 498.5)" fill="#0a0a0a"/><ellipse cx="1012.3" cy="501.5" rx="4.7" ry="3.1" transform="rotate(-24 1012.3 501.5)" fill="#0a0a0a"/><polygon points="975.5,476 1016.9,480.3 1016.9,483.3 975.5,479" fill="#0a0a0a"/><path d="M976 497.5V476.5" stroke="#0a0a0a" stroke-width="1.15"/><path d="M1016.3 500.5V480.8" stroke="#0a0a0a" stroke-width="1.15"/><ellipse cx="1052.6" cy="501.5" rx="4.7" ry="3.1" transform="rotate(-24 1052.6 501.5)" fill="#0a0a0a"/><path d="M1056.6 500.5V480" stroke="#0a0a0a" stroke-width="1.15"/><path d="M936.5 499.7 C943.298 506.365 960.602 506.365 967.4 499.7 C960.602 503.5657 943.298 503.5657 936.5 499.7Z" fill="#0a0a0a"/><path d="M1016.9 502.7 C1023.742 509.365 1041.158 509.365 1048 502.7 C1041.158 506.5657 1023.742 506.5657 1016.9 502.7Z" fill="#0a0a0a"/><text x="464.5" y="527.5" font-size="10.2">pontem</text><text x="524" y="527.5" font-size="10.2">suspendere</text><text x="577" y="527.5" font-size="10.2">navium</text><text x="622" y="527.5" font-size="10.2">conpage</text><text x="670" y="527.5" font-size="10.2">Romani</text><text x="729" y="527.5" font-size="10.2">vi</text><text x="879" y="527.5" font-size="10.2">nimia</text><text x="910" y="527.5" font-size="10.2">vetabantur</text><text x="964" y="527.5" font-size="10.2">ritu</text><text x="992" y="527.5" font-size="10.2">grandinis</text><text x="1035" y="527.5" font-size="10.2">undique</text>
<path d="M422.5 551.5H1124" stroke="#9c9c9c" stroke-width="1"/><path d="M422.5 557.5H1124" stroke="#9c9c9c" stroke-width="1"/><path d="M422.5 563.5H1124" stroke="#9c9c9c" stroke-width="1"/><path d="M422.5 569.5H1124" stroke="#9c9c9c" stroke-width="1"/><path d="M422.5 575.5H1124" stroke="#9c9c9c" stroke-width="1"/><path d="M422.5 551V576" stroke="#555" stroke-width="1"/><g transform="translate(434.7 551.5)" fill="none" stroke="#0a0a0a" stroke-linecap="round"><path d="M -2.2 20.7 C -4.5 20 -5.6 18.5 -5 17 C -4.3 14 -1.5 12.5 0.8 12.5 C 4 12.5 6.2 15.5 6.1 18.8 C 6 22 2.5 24.2 -1.6 24 C -6.5 23.8 -9.6 20.5 -9.5 16.9 C -9.4 13.5 -7 11.5 -4.5 9.2 C -1 6 3.6 2 3.6 -2 C 3.6 -4.5 2.8 -5.4 1.6 -5.4 C -0.5 -5.4 -2.4 -2 -1.9 0.5 C -1.5 4 -0.9 8 -0.2 16.9 L 1.3 25.8 L 1.6 28.9 C 1.9 31.5 0.5 33 -1.5 32.8 C -2.6 32.7 -3.4 32.2 -4 31.6" stroke-width="1.05"/><path d="M -1.6 24 C -6.5 23.8 -9.6 20.5 -9.5 16.9 C -9.4 13.5 -7 11.5 -4.5 9.2" stroke-width="2.5" transform="translate(.6 -.3)"/><path d="M 0.8 12.5 C 4 12.5 6.2 15.5 6.1 18.8 C 6 22 2.5 24.2 -1.6 24" stroke-width="2" transform="translate(-.4 -.3)"/><path d="M -5 17 C -4.3 14 -1.5 12.5 0.8 12.5" stroke-width="1.7" transform="translate(.3 .3)"/><path d="M -4.5 9.2 C -1 6 3.6 2 3.6 -2" stroke-width="2.1" transform="translate(-.3 0)"/><path d="M 3.6 -2 C 3.6 -4.5 2.8 -5.4 1.6 -5.4" stroke-width="1.5"/><circle cx="-4.3" cy="30.3" r="2.55" fill="#0a0a0a" stroke="none"/></g><g transform="translate(450.4 551.5)" stroke="#0a0a0a"><path d="M-1 -6.8V8.3M1 -8.3V6.8" stroke-width=".85"/><path d="M-3.5 -2.1L3.5 -3.9M-3.5 3.9L3.5 2.1" stroke-width="1.75"/></g><g transform="translate(456.7 560.5)" stroke="#0a0a0a"><path d="M-1 -6.8V8.3M1 -8.3V6.8" stroke-width=".85"/><path d="M-3.5 -2.1L3.5 -3.9M-3.5 3.9L3.5 2.1" stroke-width="1.75"/></g><text x="460.3" y="548.8" font-size="7.6" fill="#7c7c7c">11</text><path d="M1124 551V576" stroke="#555" stroke-width="1.1"/><path transform="translate(481 564)" d="M-1.3 -7.5 L2.6 -2.6 C0.6 -0.8 0.4 1 2.8 3.6 C0.6 3 -1.4 3.6 0 7.6 C-3.2 5.6 -3.4 1.6 0.2 1.9 L-2.3 -1.6 C-0.2 -3.4 0 -5.2 -1.3 -7.5Z" fill="#0a0a0a"/><path d="M540.8 581.5H557.2" stroke="#a4a4a4" stroke-width="1"/><path d="M540.8 587.5H557.2" stroke="#a4a4a4" stroke-width="1"/><ellipse cx="549" cy="587.5" rx="4.7" ry="3.1" transform="rotate(-24 549 587.5)" fill="#0a0a0a"/><path d="M590.0999999999999 581.5H606.5" stroke="#a4a4a4" stroke-width="1"/><ellipse cx="598.3" cy="581.5" rx="4.7" ry="3.1" transform="rotate(-24 598.3 581.5)" fill="#0a0a0a"/><polygon points="552.5,565.2 602.9,559 602.9,562 552.5,568.2" fill="#0a0a0a"/><path d="M553 586.5V565.7" stroke="#0a0a0a" stroke-width="1.15"/><path d="M602.3 580.5V559.5" stroke="#0a0a0a" stroke-width="1.15"/><path d="M638.4 581.5H654.8000000000001" stroke="#a4a4a4" stroke-width="1"/><ellipse cx="646.6" cy="581.5" rx="4.7" ry="3.1" transform="rotate(-24 646.6 581.5)" fill="#0a0a0a"/><ellipse cx="695.5" cy="578.5" rx="4.7" ry="3.1" transform="rotate(-24 695.5 578.5)" fill="#0a0a0a"/><polygon points="650.1,559.3 700.1,556.2 700.1,559.2 650.1,562.3" fill="#0a0a0a"/><path d="M650.6 580.5V559.8" stroke="#0a0a0a" stroke-width="1.15"/><path d="M699.5 577.5V556.7" stroke="#0a0a0a" stroke-width="1.15"/><ellipse cx="743.2" cy="578.5" rx="4.7" ry="3.1" transform="rotate(-24 743.2 578.5)" fill="#0a0a0a"/><path d="M747.2 577.5V557" stroke="#0a0a0a" stroke-width="1.15"/><path d="M602.9 582.7 C611.502 589.365 633.398 589.365 642 582.7 C633.398 586.5657 611.502 586.5657 602.9 582.7Z" fill="#0a0a0a"/><path d="M700.1 579.7 C708.57 586.365 730.13 586.365 738.6 579.7 C730.13 583.5657 708.57 583.5657 700.1 579.7Z" fill="#0a0a0a"/><path d="M829.8 551V576" stroke="#2a2a2a" stroke-width="1.1"/><text x="827.4" y="548.6" font-size="7.6" fill="#7c7c7c">12</text><ellipse cx="848.3" cy="575.5" rx="4.7" ry="3.1" transform="rotate(-24 848.3 575.5)" fill="#0a0a0a"/><path d="M852.3 574.5V553.5" stroke="#0a0a0a" stroke-width="1.15"/><path d="M851.8 553.5 C852.8 558.5 859.9 561.5 859.3 567.5 C859.3 570 858.0999999999999 572 856.9 573.3 C858.9 567.5 856.3 563.5 851.8 560Z" fill="#0a0a0a"/><ellipse cx="889" cy="578.5" rx="4.7" ry="3.1" transform="rotate(-24 889 578.5)" fill="#0a0a0a"/><path d="M893 577.5V557" stroke="#0a0a0a" stroke-width="1.15"/><ellipse cx="949" cy="578.5" rx="4.7" ry="3.1" transform="rotate(-24 949 578.5)" fill="#0a0a0a"/><path d="M953 577.5V557" stroke="#0a0a0a" stroke-width="1.15"/><ellipse cx="1008" cy="578.5" rx="4.7" ry="3.1" transform="rotate(-24 1008 578.5)" fill="#0a0a0a"/><path d="M1012 577.5V557" stroke="#0a0a0a" stroke-width="1.15"/><ellipse cx="1067" cy="578.5" rx="4.7" ry="3.1" transform="rotate(-24 1067 578.5)" fill="#0a0a0a"/><path d="M1071 577.5V556.5" stroke="#0a0a0a" stroke-width="1.15"/><path d="M1070.5 556.5 C1071.5 561.5 1078.6 564.5 1078 570.5 C1078 573 1076.8 575 1075.6 576.3 C1077.6 570.5 1075 566.5 1070.5 563Z" fill="#0a0a0a"/><path d="M1071.5 578.9 C1082.5 585.5649999999999 1110.5 585.5649999999999 1121.5 578.9 C1110.5 582.7656999999999 1082.5 582.7656999999999 1071.5 578.9Z" fill="#0a0a0a"/><text x="519.5" y="604.5" font-size="10.2">convolantibus</text><text x="587" y="604.5" font-size="10.2">telis,</text><text x="641" y="604.5" font-size="10.2">et</text><text x="685" y="604.5" font-size="10.2">cum</text><text x="739" y="604.5" font-size="10.2">id</text><text x="825.5" y="604.5" font-size="10.2">inpossibilevideretur,</text><text x="929" y="604.5" font-size="10.2">imperator</text><text x="979" y="604.5" font-size="10.2">cogitationibus</text><text x="1051" y="604.5" font-size="10.2">magnis</text>
<path d="M422.5 631.5H1124" stroke="#9c9c9c" stroke-width="1"/><path d="M422.5 637.5H1124" stroke="#9c9c9c" stroke-width="1"/><path d="M422.5 643.5H1124" stroke="#9c9c9c" stroke-width="1"/><path d="M422.5 649.5H1124" stroke="#9c9c9c" stroke-width="1"/><path d="M422.5 655.5H1124" stroke="#9c9c9c" stroke-width="1"/><path d="M422.5 631V656" stroke="#555" stroke-width="1"/><g transform="translate(434.7 631.5)" fill="none" stroke="#0a0a0a" stroke-linecap="round"><path d="M -2.2 20.7 C -4.5 20 -5.6 18.5 -5 17 C -4.3 14 -1.5 12.5 0.8 12.5 C 4 12.5 6.2 15.5 6.1 18.8 C 6 22 2.5 24.2 -1.6 24 C -6.5 23.8 -9.6 20.5 -9.5 16.9 C -9.4 13.5 -7 11.5 -4.5 9.2 C -1 6 3.6 2 3.6 -2 C 3.6 -4.5 2.8 -5.4 1.6 -5.4 C -0.5 -5.4 -2.4 -2 -1.9 0.5 C -1.5 4 -0.9 8 -0.2 16.9 L 1.3 25.8 L 1.6 28.9 C 1.9 31.5 0.5 33 -1.5 32.8 C -2.6 32.7 -3.4 32.2 -4 31.6" stroke-width="1.05"/><path d="M -1.6 24 C -6.5 23.8 -9.6 20.5 -9.5 16.9 C -9.4 13.5 -7 11.5 -4.5 9.2" stroke-width="2.5" transform="translate(.6 -.3)"/><path d="M 0.8 12.5 C 4 12.5 6.2 15.5 6.1 18.8 C 6 22 2.5 24.2 -1.6 24" stroke-width="2" transform="translate(-.4 -.3)"/><path d="M -5 17 C -4.3 14 -1.5 12.5 0.8 12.5" stroke-width="1.7" transform="translate(.3 .3)"/><path d="M -4.5 9.2 C -1 6 3.6 2 3.6 -2" stroke-width="2.1" transform="translate(-.3 0)"/><path d="M 3.6 -2 C 3.6 -4.5 2.8 -5.4 1.6 -5.4" stroke-width="1.5"/><circle cx="-4.3" cy="30.3" r="2.55" fill="#0a0a0a" stroke="none"/></g><g transform="translate(450.4 631.5)" stroke="#0a0a0a"><path d="M-1 -6.8V8.3M1 -8.3V6.8" stroke-width=".85"/><path d="M-3.5 -2.1L3.5 -3.9M-3.5 3.9L3.5 2.1" stroke-width="1.75"/></g><g transform="translate(456.7 640.5)" stroke="#0a0a0a"><path d="M-1 -6.8V8.3M1 -8.3V6.8" stroke-width=".85"/><path d="M-3.5 -2.1L3.5 -3.9M-3.5 3.9L3.5 2.1" stroke-width="1.75"/></g><text x="460.3" y="628.8" font-size="7.6" fill="#7c7c7c">13</text><path d="M1124 631V656" stroke="#555" stroke-width="1.1"/><path d="M463.2 659.7 C465.532 665.032 471.468 665.032 473.8 659.7 C471.468 662.2327 465.532 662.2327 463.2 659.7Z" fill="#0a0a0a"/><ellipse cx="481" cy="658.5" rx="4.7" ry="3.1" transform="rotate(-24 481 658.5)" fill="#0a0a0a"/><path d="M485 657.5V636.5" stroke="#0a0a0a" stroke-width="1.15"/><path d="M484.5 636.5 C485.5 641.5 492.6 644.5 492 650.5 C492 653 490.8 655 489.6 656.3 C491.6 650.5 489 646.5 484.5 643Z" fill="#0a0a0a"/><g transform="translate(528.7 643.5)"><circle cx="-1.8" cy="-2.6" r="1.7" fill="#0a0a0a"/><path d="M-2.5 -1.4 C-0.5 -0.8 1.5 -1.8 2.6 -3.6 L0.2 5.5" fill="none" stroke="#0a0a0a" stroke-width="1.1"/></g><path transform="translate(577 644)" d="M-1.3 -7.5 L2.6 -2.6 C0.6 -0.8 0.4 1 2.8 3.6 C0.6 3 -1.4 3.6 0 7.6 C-3.2 5.6 -3.4 1.6 0.2 1.9 L-2.3 -1.6 C-0.2 -3.4 0 -5.2 -1.3 -7.5Z" fill="#0a0a0a"/><circle cx="584" cy="640.5" r="1.1"/><ellipse cx="665" cy="652.5" rx="4.7" ry="3.1" transform="rotate(-24 665 652.5)" fill="#0a0a0a"/><path d="M669 651.5V630.5" stroke="#0a0a0a" stroke-width="1.15"/><path d="M668.5 630.5 C669.5 635.5 676.6 638.5 676 644.5 C676 647 674.8 649 673.6 650.3 C675.6 644.5 673 640.5 668.5 637Z" fill="#0a0a0a"/><ellipse cx="712.8" cy="658.5" rx="4.7" ry="3.1" transform="rotate(-24 712.8 658.5)" fill="#0a0a0a"/><ellipse cx="762.3" cy="655.5" rx="4.7" ry="3.1" transform="rotate(-24 762.3 655.5)" fill="#0a0a0a"/><polygon points="716.3,636.4 766.9,633.6 766.9,636.6 716.3,639.4" fill="#0a0a0a"/><path d="M716.8 657.5V636.9" stroke="#0a0a0a" stroke-width="1.15"/><path d="M766.3 654.5V634.1" stroke="#0a0a0a" stroke-width="1.15"/><path d="M766.9 656.7 C783.62 664.0315 826.18 664.0315 842.9 656.7 C826.18 661.2322 783.62 661.2322 766.9 656.7Z" fill="#0a0a0a"/><path d="M829 631V656" stroke="#2a2a2a" stroke-width="1.1"/><text x="826.6" y="628.6" font-size="7.6" fill="#7c7c7c">14</text><ellipse cx="847.5" cy="655.5" rx="4.7" ry="3.1" transform="rotate(-24 847.5 655.5)" fill="#0a0a0a"/><path d="M851.5 654.5V634" stroke="#0a0a0a" stroke-width="1.15"/><ellipse cx="906.3" cy="658.5" rx="4.7" ry="3.1" transform="rotate(-24 906.3 658.5)" fill="#0a0a0a"/><path d="M910.3 657.5V636.5" stroke="#0a0a0a" stroke-width="1.15"/><path d="M909.8 636.5 C910.8 641.5 917.9 644.5 917.3 650.5 C917.3 653 916.0999999999999 655 914.9 656.3 C916.9 650.5 914.3 646.5 909.8 643Z" fill="#0a0a0a"/><ellipse cx="948.3" cy="655.5" rx="4.7" ry="3.1" transform="rotate(-24 948.3 655.5)" fill="#0a0a0a"/><path d="M952.3 654.5V634" stroke="#0a0a0a" stroke-width="1.15"/><ellipse cx="1007.5" cy="652.5" rx="4.7" ry="3.1" transform="rotate(-24 1007.5 652.5)" fill="#0a0a0a"/><path d="M1011.5 651.5V631" stroke="#0a0a0a" stroke-width="1.15"/><ellipse cx="1067" cy="658.5" rx="4.7" ry="3.1" transform="rotate(-24 1067 658.5)" fill="#0a0a0a"/><path d="M1071 657.5V636.5" stroke="#0a0a0a" stroke-width="1.15"/><path d="M1070.5 636.5 C1071.5 641.5 1078.6 644.5 1078 650.5 C1078 653 1076.8 655 1075.6 656.3 C1077.6 650.5 1075 646.5 1070.5 643Z" fill="#0a0a0a"/><path d="M1071.5 658.9 C1082.5 665.5649999999999 1110.5 665.5649999999999 1121.5 658.9 C1110.5 662.7656999999999 1082.5 662.7656999999999 1071.5 658.9Z" fill="#0a0a0a"/>
</svg>
<div class="a" style="left:282px;top:587px;width:121px;height:81px;background:rgba(122,122,122,.5);border:1px solid #141414;overflow:hidden"><div class="a" style="left:40.3px;top:27.3px;width:38.7px;height:24.5px;background:linear-gradient(90deg,#6c7cc0 0 3px,#a6aee6 3px 34px,#6c7cc0 34px);border:1px solid #0c0c20"><div class="a" style="left:9px;top:5px;width:22px;height:3px;border:1px solid #27337c"></div><div class="a" style="left:6px;top:9.5px;width:25px;height:2px;background:#27337c"></div><div class="a" style="left:6px;top:13.5px;width:25px;height:2px;background:#27337c"></div><div class="a" style="left:6px;top:16.5px;width:25px;height:2px;background:#27337c"></div><div class="a" style="left:6px;top:19.5px;width:25px;height:2px;background:#27337c"></div></div><div class="a" style="left:43.7px;top:51.8px;width:31.2px;height:21px;background:#f4f4f4;border:1px solid #111"><div class="a" style="left:3px;top:3.5px;width:24px;height:1.5px;background:#050505"></div><div class="a" style="left:3px;top:6.5px;width:24px;height:1.5px;background:#050505"></div><div class="a" style="left:3px;top:9.8px;width:24px;height:3.2px;background:#050505"></div><div class="a" style="left:3px;top:14.5px;width:24px;height:1.2px;background:#050505"></div><div class="a" style="left:3px;top:17px;width:24px;height:1.2px;background:#050505"></div></div><div class="a" style="left:43.7px;top:75.5px;width:31.2px;height:10px;background:#f4f4f4;border:1px solid #111"><div class="a" style="left:3px;top:2px;width:24px;height:1.5px;background:#050505"></div></div></div>
<div class="a" style="left:1250px;top:56px;width:17px;height:617px;background:#5a5c5a;border-left:1px solid #3a3a3a"></div>
<div class="a" style="left:1251px;top:57px;width:16px;height:16px;background:#5f615f;border-bottom:1px solid #2c2c2c"></div>
<div class="a" style="left:1251px;top:73px;width:15px;height:76px;background:linear-gradient(90deg,#8f918f,#868886);border:1px solid #1c1c1c"></div>
<div class="a" style="left:1251px;top:657px;width:16px;height:16px;background:#5f615f;border-top:1px solid #2c2c2c"></div>
<svg style="left:1251px;top:57px" width="16" height="616" viewBox="0 0 16 616"><polygon points="3.5,10.4 11.5,10.4 7.5,4.8" fill="#f0f0f0"/><polygon points="3.5,605.6 11.5,605.6 7.5,611.2" fill="#f0f0f0"/></svg>
<div class="a" style="left:275px;top:673px;width:992px;height:17px;background:#5a5c5a;border-top:1px solid #2a2a2a;border-bottom:1px solid #2a2a2a"></div>
<div class="a" style="left:276px;top:674px;width:17px;height:15px;background:#5f615f;border-right:1px solid #2c2c2c"></div>
<div class="a" style="left:293px;top:674px;width:942px;height:15px;background:linear-gradient(#8f918f,#848684);border:1px solid #3a3a3a"></div>
<div class="a" style="left:1235px;top:674px;width:16px;height:15px;background:#5f615f;border-right:1px solid #2c2c2c"></div>
<svg style="left:276px;top:674px" width="975" height="15" viewBox="0 0 975 15"><polygon points="10.4,3.5 10.4,11.5 4.8,7.5" fill="#f0f0f0"/><polygon points="964.6,3.5 964.6,11.5 970.2,7.5" fill="#f0f0f0"/></svg>
<svg style="left:1252px;top:674px" width="14" height="15" viewBox="0 0 14 15"><path d="M4 7V4.8a3 3 0 0 1 6 0V7" fill="none" stroke="#c8a030" stroke-width="1.6"/><rect x="1.5" y="6.5" width="11" height="8" rx="1" fill="#f0b820" stroke="#b07c08" stroke-width=".8"/><rect x="6.3" y="9" width="1.4" height="3" fill="#8a5c00"/></svg>
<div class="a" style="left:275px;top:690px;width:992px;height:29px;background:linear-gradient(#f6f6f6,#e8e8e8 40%,#c4c4c4);border-bottom:1px solid #4a4a4a"></div>
<div class="a" style="left:286px;top:695px;width:56px;height:18px;background:linear-gradient(#ffffff,#f2f2f2 50%,#e2e2e2);border:1px solid #8a8a8a;border-radius:5px;box-shadow:0 1px 0 rgba(255,255,255,.7)"></div>
<div class="t" style="left:293px;top:696.5px;font-size:13.5px;line-height:16px;color:#333;letter-spacing:-.2px">100%</div>
<svg style="left:330px;top:698px" width="8" height="12" viewBox="0 0 8 12"><polygon points="1.4,4.76 6.6,4.76 4,1.12" fill="#222"/><polygon points="1.4,7.24 6.6,7.24 4,10.88" fill="#222"/></svg>
<div class="a" style="left:345px;top:695px;width:36px;height:18px;background:linear-gradient(#ffffff,#f2f2f2 50%,#e2e2e2);border:1px solid #8a8a8a;border-radius:5px;box-shadow:0 1px 0 rgba(255,255,255,.7)"></div>
<svg style="left:351px;top:696px" width="14" height="16" viewBox="0 0 14 16"><path d="M1 0V16M13 0V16M1 7.5H13" stroke="#333" stroke-width="1.2" fill="none"/><rect x="1.6" y="8" width="10.8" height="8" fill="#fff"/></svg>
<svg style="left:369px;top:698px" width="8" height="12" viewBox="0 0 8 12"><polygon points="1.4,4.76 6.6,4.76 4,1.12" fill="#222"/><polygon points="1.4,7.24 6.6,7.24 4,10.88" fill="#222"/></svg>
<div class="a" style="left:385px;top:695px;width:26px;height:18px;background:linear-gradient(#ffffff,#f2f2f2 50%,#e2e2e2);border:1px solid #8a8a8a;border-radius:5px;box-shadow:0 1px 0 rgba(255,255,255,.7)"></div>
<svg style="left:389px;top:697px" width="18" height="15" viewBox="0 0 18 15"><path d="M2 3.5H16M2 3.5l3-2.5M2 3.5l3 2.5M16 3.5l-3-2.5M16 3.5l-3 2.5" stroke="#222" stroke-width="1.2" fill="none"/><path d="M3.5 8H14.5L9 14z" fill="#2a84e8"/></svg>
<div class="a" style="left:414px;top:695px;width:36px;height:18px;background:linear-gradient(#ffffff,#f2f2f2 50%,#e2e2e2);border:1px solid #8a8a8a;border-radius:5px;box-shadow:0 1px 0 rgba(255,255,255,.7)"></div>
<svg style="left:418px;top:698px" width="30" height="13" viewBox="0 0 30 13"><path d="M3 0.5C1 3 1 10 3 12.5" stroke="#222" stroke-width="1.3" fill="none"/><path d="M5.5 0V13" stroke="#222" stroke-width="1.6"/><path d="M5.5 6.5H28.5" stroke="#222" stroke-width="1.3"/></svg>
<div class="a" style="left:454px;top:695px;width:112px;height:18px;background:linear-gradient(#ffffff,#f2f2f2 50%,#e2e2e2);border:1px solid #8a8a8a;border-radius:5px;box-shadow:0 1px 0 rgba(255,255,255,.7)"><div class="a" style="left:0;top:0;width:23px;height:16px;border-radius:4px 0 0 4px;background:linear-gradient(#ffd98a,#ffc83a 45%,#ffb400 50%,#ffbe10)"></div></div>
<div class="t" style="left:461.7px;top:696.5px;font-size:13px;font-weight:bold;line-height:15px;color:#1c1c1c;transform:scaleX(1.1);transform-origin:50% 50%">1</div>
<div class="t" style="left:483.7px;top:696.5px;font-size:13px;font-weight:bold;line-height:15px;color:#1c1c1c;transform:scaleX(1.1);transform-origin:50% 50%">2</div>
<div class="t" style="left:505.7px;top:696.5px;font-size:13px;font-weight:bold;line-height:15px;color:#1c1c1c;transform:scaleX(1.1);transform-origin:50% 50%">3</div>
<div class="t" style="left:527.7px;top:696.5px;font-size:13px;font-weight:bold;line-height:15px;color:#1c1c1c;transform:scaleX(1.1);transform-origin:50% 50%">4</div>
<svg style="left:546px;top:696px" width="16" height="16" viewBox="546 696 16 16"><path d="M548 704H560M548 706H560M548 708H560" stroke="#c4c4c4" stroke-width=".7"/><path d="M552.2 699.6L558.6 698.6" stroke="#222" stroke-width="2"/><path d="M552.4 699.5V703M558.4 698.6V702.4" stroke="#222" stroke-width="1"/><ellipse cx="551" cy="703.2" rx="1.9" ry="1.35" transform="rotate(-20 551 703.2)" fill="#222"/><ellipse cx="557" cy="702.5" rx="1.9" ry="1.35" transform="rotate(-20 557 702.5)" fill="#222"/><ellipse cx="549" cy="709.6" rx="1.5" ry="1.1" transform="rotate(-20 549 709.6)" fill="#222"/><path d="M550.2 709.4V706.2L552.4 705.6" stroke="#222" stroke-width="1" fill="none"/></svg>
<div class="a" style="left:676px;top:692px;width:192px;height:23px;background:linear-gradient(#ffffff,#f2f2f2 50%,#e2e2e2);border:1px solid #8a8a8a;border-radius:5px;box-shadow:0 1px 0 rgba(255,255,255,.7)"></div>
<svg style="left:676px;top:692px" width="192" height="23" viewBox="676 692 192 23"><rect x="687" y="698" width="2.6" height="11" fill="#4a4a4a"/><polygon points="700.5,698 700.5,709 690,703.5" fill="#4a4a4a"/><polygon points="722,698 722,709 712.5,703.5" fill="#4a4a4a"/><polygon points="733,698 733,709 723.5,703.5" fill="#4a4a4a"/><polygon points="746,695.5 746,711.5 762,703.5" fill="#4a4a4a"/><polygon points="775,698 775,709 784.5,703.5" fill="#4a4a4a"/><polygon points="786,698 786,709 795.5,703.5" fill="#4a4a4a"/><polygon points="808,698 808,709 818.5,703.5" fill="#4a4a4a"/><rect x="818.5" y="698" width="2.6" height="11" fill="#4a4a4a"/><path d="M846 699.5H837.5Q834.5 699.5 834.5 702.5V705Q834.5 708 837.5 708H839.5M841 708H849Q852 708 852 705V702.5Q852 699.5 849 699.5" fill="none" stroke="#2b9af0" stroke-width="1.7"/><polygon points="845,696.5 845,702.5 849.5,699.5" fill="#2b9af0"/><polygon points="842.5,705 842.5,711 838,708" fill="#2b9af0"/></svg>
<svg style="left:1090.6px;top:695.5px" width="13" height="18" viewBox="0 0 13 18"><path d="M5.4 1.2H7.6L12.6 17.4H0.3z" fill="#333"/><path d="M7.4 11.5L0.4 0.3" stroke="#333" stroke-width="1.9"/><path d="M7 10.8L3.4 5" stroke="#efefef" stroke-width=".9"/></svg>
<svg style="left:1114.3px;top:695.5px" width="17" height="18" viewBox="0 0 17 18"><path d="M5.4 1.2H7.6L12.6 17.4H0.3z" fill="#333"/><path d="M7.4 11.5L0.4 0.3" stroke="#333" stroke-width="1.9"/><path d="M7 10.8L3.4 5" stroke="#efefef" stroke-width=".9"/><circle cx="11.4" cy="5.8" r="3.9" fill="#fafafa" stroke="#333" stroke-width="1"/><path d="M11.4 3.4V6H13.6" stroke="#333" stroke-width=".9" fill="none"/></svg>
<div class="a" style="left:1138px;top:695px;width:57px;height:18px;background:linear-gradient(#ffffff,#f2f2f2 50%,#e2e2e2);border:1px solid #8a8a8a;border-radius:5px;box-shadow:0 1px 0 rgba(255,255,255,.7)"></div>
<svg style="left:1141px;top:696px" width="20" height="15" viewBox="1141 696 20 15"><ellipse cx="1145.5" cy="708.3" rx="3" ry="2.1" transform="rotate(-22 1145.5 708.3)" fill="#1e1e1e"/><path d="M1148.2 708V698" stroke="#1e1e1e" stroke-width="1.1"/><path d="M1154 706.8H1158.5M1154 708.2H1158.5" stroke="#555" stroke-width=".9"/></svg>
<div class="t" style="left:1164px;top:696.5px;font-size:13.5px;line-height:16px;color:#333;letter-spacing:-.3px">112</div>
<div class="a" style="left:1199px;top:695px;width:57px;height:18px;background:linear-gradient(#ffffff,#f2f2f2 50%,#e2e2e2);border:1px solid #8a8a8a;border-radius:5px;box-shadow:0 1px 0 rgba(255,255,255,.7)"></div>
<div class="t" style="left:1210px;top:696.5px;font-size:13.5px;line-height:16px;color:#333">1&#46;00</div>
<svg style="left:1244px;top:698px" width="8" height="12" viewBox="0 0 8 12"><polygon points="1.4,4.76 6.6,4.76 4,1.12" fill="#222"/><polygon points="1.4,7.24 6.6,7.24 4,10.88" fill="#222"/></svg>
<div class="a" style="left:0px;top:719px;width:1267px;height:20px;background:linear-gradient(#727472,#5c5e5c);border-top:1px solid #8a8c8a;border-bottom:1px solid #3c3c3c"></div>
<svg style="left:5px;top:725px" width="10" height="6" viewBox="0 0 10 6"><rect x="0" y="0" width="1" height="1" fill="#d6d6d6"/><rect x="0" y="1.5" width="1" height="1" fill="#d6d6d6"/><rect x="0" y="3" width="1" height="1" fill="#d6d6d6"/><rect x="0" y="4.5" width="1" height="1" fill="#d6d6d6"/><rect x="2" y="0" width="1" height="1" fill="#d6d6d6"/><rect x="2" y="1.5" width="1" height="1" fill="#d6d6d6"/><rect x="2" y="3" width="1" height="1" fill="#d6d6d6"/><rect x="2" y="4.5" width="1" height="1" fill="#d6d6d6"/><rect x="4" y="0" width="1" height="1" fill="#d6d6d6"/><rect x="4" y="1.5" width="1" height="1" fill="#d6d6d6"/><rect x="4" y="3" width="1" height="1" fill="#d6d6d6"/><rect x="4" y="4.5" width="1" height="1" fill="#d6d6d6"/><rect x="6" y="0" width="1" height="1" fill="#d6d6d6"/><rect x="6" y="1.5" width="1" height="1" fill="#d6d6d6"/><rect x="6" y="3" width="1" height="1" fill="#d6d6d6"/><rect x="6" y="4.5" width="1" height="1" fill="#d6d6d6"/><rect x="8" y="0" width="1" height="1" fill="#d6d6d6"/><rect x="8" y="1.5" width="1" height="1" fill="#d6d6d6"/><rect x="8" y="3" width="1" height="1" fill="#d6d6d6"/><rect x="8" y="4.5" width="1" height="1" fill="#d6d6d6"/></svg>
<svg style="left:30px;top:722px" width="100" height="16" viewBox="30 722 100 16"><path d="M37 730.4H46M41.5 726V735" stroke="#ececec" stroke-width="2"/><path d="M53.8 727.4L60.8 734.4M60.8 727.4L53.8 734.4" stroke="#ececec" stroke-width="2"/><path d="M99.2 726.6L103.4 731.2H100.7V735.2H97.7V731.2H95z" fill="#ececec"/><path d="M115.4 735.2L119.6 730.6H116.9V726.6H113.9V730.6H111.2z" fill="#ececec"/></svg>
<div class="t" style="left:76.5px;top:724.5px;font-style:italic;font-weight:bold;font-size:12.5px;line-height:13px;color:#ececec">i</div>
<div class="t" style="left:212.5px;top:723.5px;font-size:12px;font-weight:bold;line-height:13px;color:#f4f4f4">S</div>
<div class="t" style="left:233px;top:723.5px;font-size:12px;font-weight:bold;line-height:13px;color:#f4f4f4">M</div>
<svg style="left:254.5px;top:725px" width="12" height="10" viewBox="0 0 12 10"><path d="M0.3 4.2C2.5 0.6 8.5 0.2 11.3 4.2" fill="none" stroke="#0a0a0a" stroke-width="1.5"/><path d="M0.8 5.2C3 2.2 8.6 2.2 11 5.2C8.6 8.6 3 8.6 0.8 5.2Z" fill="#0a0a0a"/><path d="M1.5 7.6C4 9.6 8 9.6 10.4 7.4" fill="none" stroke="#0a0a0a" stroke-width=".7"/><circle cx="5" cy="4.7" r="1.05" fill="#fff"/><path d="M8.3 5.2C8.3 6 7.7 6.9 6.8 7.3" stroke="#9a9a9a" stroke-width=".7" fill="none"/></svg>
<div class="t" style="left:307px;top:724.5px;font-size:10.5px;font-weight:bold;line-height:12px;color:#f4f4f4">Vol.</div>
<div class="t" style="left:368px;top:724.5px;font-size:10.5px;font-weight:bold;line-height:12px;color:#f4f4f4">Pan</div>
<svg style="left:568px;top:725px" width="12" height="10" viewBox="0 0 12 10"><rect x="0" y="0.5" width="2.5" height="2.5" fill="#ececec"/><rect x="4" y="0.5" width="2.5" height="2.5" fill="#ececec"/><rect x="0" y="5" width="2.5" height="2.5" fill="#ececec"/><path d="M4.5 6.3H11.5M4.5 6.3l3-2.8M4.5 6.3l3 2.8" stroke="#ececec" stroke-width="1.5" fill="none"/></svg>
<div class="a" style="left:584px;top:722px;width:1px;height:16px;background:repeating-linear-gradient(#d8d8d8 0 1px,transparent 1px 2px)"></div>
<svg width="0" height="0" style="left:0;top:0"><defs><radialGradient id="kg0" cx=".4" cy=".3" r=".8"><stop offset="0" stop-color="#707070"/><stop offset="1" stop-color="#3c3c3c"/></radialGradient><radialGradient id="kg1" cx=".4" cy=".3" r=".8"><stop offset="0" stop-color="#fafafa"/><stop offset="1" stop-color="#bcbcbc"/></radialGradient><radialGradient id="kg2" cx=".4" cy=".3" r=".8"><stop offset="0" stop-color="#a8a8a8"/><stop offset="1" stop-color="#767676"/></radialGradient><radialGradient id="kg3" cx=".4" cy=".3" r=".8"><stop offset="0" stop-color="#8e908e"/><stop offset="1" stop-color="#747674"/></radialGradient><radialGradient id="kg4" cx=".4" cy=".3" r=".8"><stop offset="0" stop-color="#5a5a5a"/><stop offset="1" stop-color="#262626"/></radialGradient><linearGradient id="ledo" x1="0" y1="0" x2="0" y2="1"><stop offset="0" stop-color="#ffb000"/><stop offset=".55" stop-color="#ff7a00"/><stop offset="1" stop-color="#f04a10"/></linearGradient><radialGradient id="ledw" cx=".45" cy=".35" r=".7"><stop offset="0" stop-color="#f2f2f2"/><stop offset="1" stop-color="#b4b4b4"/></radialGradient></defs></svg>
<div class="a" style="left:0px;top:739px;width:584px;height:21px;background:linear-gradient(#7c7e7c,#717371);border:1px solid #9a9c9a;border-bottom-color:#4a4a4a"></div>
<svg style="left:19px;top:740.5px" width="12" height="18" viewBox="0 0 12 18"><rect x="3.5" y="0.5" width="5" height="10.5" rx="2.5" fill="#c2c2c2" stroke="#9a9a9a" stroke-width=".5"/><path d="M1.8 8.5c0 3 1.8 4.5 4.2 4.5s4.2-1.5 4.2-4.5" fill="none" stroke="#8e8e8e" stroke-width="1"/><path d="M6 13v3M3 16.5h6" stroke="#8e8e8e" stroke-width="1.2"/></svg>
<div class="t" style="left:39px;top:743px;font-size:12px;font-weight:bold;line-height:14px;color:#fff;text-shadow:0 1px 1px rgba(0,0,0,.6);letter-spacing:-.05px">1. Vocal</div>
<svg style="left:200px;top:739px" width="384" height="21" viewBox="200 739 384 21"><circle cx="217" cy="749" r="4" fill="url(#ledw)" stroke="#4a4a4a" stroke-width=".6"/><circle cx="238" cy="749" r="4" fill="url(#ledw)" stroke="#4a4a4a" stroke-width=".6"/><circle cx="374" cy="749" r="7.2" fill="url(#kg4)" stroke="#1a1a1a" stroke-width=".8"/><path d="M374 747.92L374 743" stroke="#fff" stroke-width="1.5" stroke-linecap="round"/><circle cx="396" cy="749" r="4.1" fill="url(#ledo)" stroke="#7a4a18" stroke-width=".3"/><circle cx="416.5" cy="749" r="7.8" fill="url(#kg0)" stroke="#2c2c2c" stroke-width=".8"/><path d="M416.99 747.94L419.29 743.02" stroke="#fff" stroke-width="1.5" stroke-linecap="round"/><circle cx="435.5" cy="749" r="7.8" fill="url(#kg1)" stroke="#707070" stroke-width=".8"/><path d="M436.46 749.67L440.91 752.79" stroke="#fff" stroke-width="1.5" stroke-linecap="round"/><circle cx="454.5" cy="749" r="7.8" fill="url(#kg0)" stroke="#2c2c2c" stroke-width=".8"/><path d="M455.17 748.04L458.29 743.59" stroke="#fff" stroke-width="1.5" stroke-linecap="round"/><circle cx="473.5" cy="749" r="7.8" fill="url(#kg2)" stroke="#4a4a4a" stroke-width=".8"/><path d="M473.8 747.87L475.21 742.62" stroke="#fff" stroke-width="1.5" stroke-linecap="round"/><circle cx="492.5" cy="749" r="7.8" fill="url(#kg1)" stroke="#707070" stroke-width=".8"/><path d="M493.51 749.59L498.22 752.3" stroke="#fff" stroke-width="1.5" stroke-linecap="round"/><circle cx="511.5" cy="749" r="7.8" fill="url(#kg0)" stroke="#2c2c2c" stroke-width=".8"/><path d="M512.17 748.04L515.29 743.59" stroke="#fff" stroke-width="1.5" stroke-linecap="round"/><circle cx="530.5" cy="749" r="7.8" fill="url(#kg1)" stroke="#707070" stroke-width=".8"/><path d="M531.46 749.67L535.91 752.79" stroke="#fff" stroke-width="1.5" stroke-linecap="round"/><circle cx="549.5" cy="749" r="7.8" fill="url(#kg0)" stroke="#2c2c2c" stroke-width=".8"/><path d="M550.25 748.1L553.74 743.94" stroke="#fff" stroke-width="1.5" stroke-linecap="round"/><circle cx="568.5" cy="749" r="7.8" fill="url(#kg0)" stroke="#2c2c2c" stroke-width=".8"/><path d="M568.99 747.94L571.29 743.02" stroke="#fff" stroke-width="1.5" stroke-linecap="round"/></svg>
<svg style="left:254.5px;top:744px" width="12" height="10" viewBox="0 0 12 10"><path d="M0.3 4.2C2.5 0.6 8.5 0.2 11.3 4.2" fill="none" stroke="#0a0a0a" stroke-width="1.5"/><path d="M0.8 5.2C3 2.2 8.6 2.2 11 5.2C8.6 8.6 3 8.6 0.8 5.2Z" fill="#0a0a0a"/><path d="M1.5 7.6C4 9.6 8 9.6 10.4 7.4" fill="none" stroke="#0a0a0a" stroke-width=".7"/><circle cx="5" cy="4.7" r="1.05" fill="#fff"/><path d="M8.3 5.2C8.3 6 7.7 6.9 6.8 7.3" stroke="#9a9a9a" stroke-width=".7" fill="none"/></svg>
<div class="a" style="left:275px;top:741.5px;width:78px;height:2.5px;background:#3a3c3a;border-radius:1px"></div>
<div class="a" style="left:275px;top:754.5px;width:78px;height:2.5px;background:#3a3c3a;border-radius:1px"></div>
<div class="a" style="left:275px;top:745.5px;width:78px;height:7.5px;background:linear-gradient(#ffffff 30%,#cfcfcf);border-radius:4px;box-shadow:0 0 0 .5px rgba(40,40,40,.6)"></div>
<div class="a" style="left:275px;top:745.5px;width:48.5px;height:7.5px;background:repeating-linear-gradient(90deg,#5ea8a6 0 1px,#84aebe 1px 2px);border-radius:4px 0 0 4px"><div class="a" style="left:0;top:0;right:0;bottom:0;background:linear-gradient(rgba(255,255,255,.28),rgba(255,255,255,0) 45%,rgba(0,0,0,.12));border-radius:4px 0 0 4px"></div></div>
<div class="a" style="left:320.5px;top:742.5px;width:6.5px;height:13px;background:linear-gradient(90deg,#8a8a8a,#f2f2f2 28%,#2e2e2e 42%,#2e2e2e 58%,#f2f2f2 72%,#8a8a8a);border:.5px solid #3a3a3a;border-radius:1.5px"></div>
<div class="a" style="left:0px;top:760px;width:584px;height:21px;background:linear-gradient(#646664,#5e605e);border-bottom:1px solid #3a3a3a;border-top:1px solid #6c6e6c"></div>
<svg style="left:17px;top:761.5px" width="16" height="18" viewBox="0 0 16 18"><defs><linearGradient id="pkpick" x1="0" y1="0" x2="0" y2="1"><stop offset="0" stop-color="#ffa380"/><stop offset="1" stop-color="#f76a3c"/></linearGradient></defs><path d="M2.6 2.4Q8 0.2 13.4 2.4Q15.7 3.5 15.2 6.2Q14 11.5 9.5 16.5Q8 18 6.5 16.5Q2 11.5 0.8 6.2Q0.3 3.5 2.6 2.4Z" fill="url(#pkpick)"/></svg>
<div class="t" style="left:39px;top:764px;font-size:12px;font-weight:bold;line-height:14px;color:#fff;text-shadow:0 1px 1px rgba(0,0,0,.6);letter-spacing:-.05px">2. A.Guitar.I</div>
<svg style="left:200px;top:760px" width="384" height="21" viewBox="200 760 384 21"><circle cx="217" cy="770" r="4" fill="url(#ledw)" stroke="#4a4a4a" stroke-width=".6"/><circle cx="238" cy="770" r="4" fill="url(#ledw)" stroke="#4a4a4a" stroke-width=".6"/><circle cx="374" cy="770" r="7.2" fill="url(#kg4)" stroke="#1a1a1a" stroke-width=".8"/><path d="M374 768.92L374 764" stroke="#fff" stroke-width="1.5" stroke-linecap="round"/><circle cx="396" cy="770" r="4.1" fill="url(#ledo)" stroke="#7a4a18" stroke-width=".3"/><circle cx="416.5" cy="770" r="7.8" fill="url(#kg0)" stroke="#2c2c2c" stroke-width=".8"/><path d="M416.9 768.9L418.76 763.8" stroke="#fff" stroke-width="1.5" stroke-linecap="round"/><circle cx="435.5" cy="770" r="7.8" fill="url(#kg1)" stroke="#707070" stroke-width=".8"/><path d="M434.33 770L428.9 770" stroke="#fff" stroke-width="1.5" stroke-linecap="round"/><circle cx="454.5" cy="770" r="7.8" fill="url(#kg0)" stroke="#2c2c2c" stroke-width=".8"/><path d="M455.17 769.04L458.29 764.59" stroke="#fff" stroke-width="1.5" stroke-linecap="round"/><circle cx="473.5" cy="770" r="7.8" fill="url(#kg2)" stroke="#4a4a4a" stroke-width=".8"/><path d="M473.5 768.83L473.5 763.4" stroke="#fff" stroke-width="1.5" stroke-linecap="round"/><circle cx="492.5" cy="770" r="7.8" fill="url(#kg1)" stroke="#707070" stroke-width=".8"/><path d="M493.6 769.6L498.7 767.74" stroke="#fff" stroke-width="1.5" stroke-linecap="round"/><circle cx="511.5" cy="770" r="7.8" fill="url(#kg0)" stroke="#2c2c2c" stroke-width=".8"/><path d="M512.17 769.04L515.29 764.59" stroke="#fff" stroke-width="1.5" stroke-linecap="round"/><circle cx="530.5" cy="770" r="7.8" fill="url(#kg1)" stroke="#707070" stroke-width=".8"/><path d="M531.46 770.67L535.91 773.79" stroke="#fff" stroke-width="1.5" stroke-linecap="round"/><circle cx="549.5" cy="770" r="7.8" fill="url(#kg0)" stroke="#2c2c2c" stroke-width=".8"/><path d="M550.25 769.1L553.74 764.94" stroke="#fff" stroke-width="1.5" stroke-linecap="round"/><circle cx="568.5" cy="770" r="7.8" fill="url(#kg0)" stroke="#2c2c2c" stroke-width=".8"/><path d="M568.99 768.94L571.29 764.02" stroke="#fff" stroke-width="1.5" stroke-linecap="round"/></svg>
<svg style="left:254.5px;top:765px" width="12" height="10" viewBox="0 0 12 10"><path d="M0.3 4.2C2.5 0.6 8.5 0.2 11.3 4.2" fill="none" stroke="#0a0a0a" stroke-width="1.5"/><path d="M0.8 5.2C3 2.2 8.6 2.2 11 5.2C8.6 8.6 3 8.6 0.8 5.2Z" fill="#0a0a0a"/><path d="M1.5 7.6C4 9.6 8 9.6 10.4 7.4" fill="none" stroke="#0a0a0a" stroke-width=".7"/><circle cx="5" cy="4.7" r="1.05" fill="#fff"/><path d="M8.3 5.2C8.3 6 7.7 6.9 6.8 7.3" stroke="#9a9a9a" stroke-width=".7" fill="none"/></svg>
<div class="a" style="left:275px;top:762.5px;width:78px;height:2.5px;background:#3a3c3a;border-radius:1px"></div>
<div class="a" style="left:275px;top:775.5px;width:78px;height:2.5px;background:#3a3c3a;border-radius:1px"></div>
<div class="a" style="left:275px;top:766.5px;width:78px;height:7.5px;background:linear-gradient(#ffffff 30%,#cfcfcf);border-radius:4px;box-shadow:0 0 0 .5px rgba(40,40,40,.6)"></div>
<div class="a" style="left:275px;top:766.5px;width:63.5px;height:7.5px;background:repeating-linear-gradient(90deg,#5ea8a6 0 1px,#84aebe 1px 2px);border-radius:4px 0 0 4px"><div class="a" style="left:0;top:0;right:0;bottom:0;background:linear-gradient(rgba(255,255,255,.28),rgba(255,255,255,0) 45%,rgba(0,0,0,.12));border-radius:4px 0 0 4px"></div></div>
<div class="a" style="left:335.5px;top:763.5px;width:6.5px;height:13px;background:linear-gradient(90deg,#8a8a8a,#f2f2f2 28%,#2e2e2e 42%,#2e2e2e 58%,#f2f2f2 72%,#8a8a8a);border:.5px solid #3a3a3a;border-radius:1.5px"></div>
<div class="a" style="left:0px;top:781px;width:584px;height:21px;background:linear-gradient(#646664,#5e605e);border-bottom:1px solid #3a3a3a;border-top:1px solid #6c6e6c"></div>
<svg style="left:17px;top:782.5px" width="16" height="18" viewBox="0 0 16 18"><defs><linearGradient id="pkpick" x1="0" y1="0" x2="0" y2="1"><stop offset="0" stop-color="#ffa380"/><stop offset="1" stop-color="#f76a3c"/></linearGradient></defs><path d="M2.6 2.4Q8 0.2 13.4 2.4Q15.7 3.5 15.2 6.2Q14 11.5 9.5 16.5Q8 18 6.5 16.5Q2 11.5 0.8 6.2Q0.3 3.5 2.6 2.4Z" fill="url(#pkpick)"/></svg>
<div class="t" style="left:39px;top:785px;font-size:12px;font-weight:bold;line-height:14px;color:#fff;text-shadow:0 1px 1px rgba(0,0,0,.6);letter-spacing:-.05px">3. A.Guitar.II</div>
<svg style="left:200px;top:781px" width="384" height="21" viewBox="200 781 384 21"><circle cx="217" cy="791" r="4" fill="url(#ledw)" stroke="#4a4a4a" stroke-width=".6"/><circle cx="238" cy="791" r="4" fill="url(#ledw)" stroke="#4a4a4a" stroke-width=".6"/><circle cx="374" cy="791" r="7.2" fill="url(#kg4)" stroke="#1a1a1a" stroke-width=".8"/><path d="M374.57 790.08L377.18 785.91" stroke="#fff" stroke-width="1.5" stroke-linecap="round"/><circle cx="396" cy="791" r="4.1" fill="url(#ledo)" stroke="#7a4a18" stroke-width=".3"/><circle cx="416.5" cy="791" r="7.8" fill="url(#kg0)" stroke="#2c2c2c" stroke-width=".8"/><path d="M416.9 789.9L418.76 784.8" stroke="#fff" stroke-width="1.5" stroke-linecap="round"/><circle cx="435.5" cy="791" r="7.8" fill="url(#kg1)" stroke="#707070" stroke-width=".8"/><path d="M434.33 791L428.9 791" stroke="#fff" stroke-width="1.5" stroke-linecap="round"/><circle cx="454.5" cy="791" r="7.8" fill="url(#kg0)" stroke="#2c2c2c" stroke-width=".8"/><path d="M455.17 790.04L458.29 785.59" stroke="#fff" stroke-width="1.5" stroke-linecap="round"/><circle cx="473.5" cy="791" r="7.8" fill="url(#kg2)" stroke="#4a4a4a" stroke-width=".8"/><path d="M473.5 789.83L473.5 784.4" stroke="#fff" stroke-width="1.5" stroke-linecap="round"/><circle cx="492.5" cy="791" r="7.8" fill="url(#kg1)" stroke="#707070" stroke-width=".8"/><path d="M493.6 790.6L498.7 788.74" stroke="#fff" stroke-width="1.5" stroke-linecap="round"/><circle cx="511.5" cy="791" r="7.8" fill="url(#kg0)" stroke="#2c2c2c" stroke-width=".8"/><path d="M512.17 790.04L515.29 785.59" stroke="#fff" stroke-width="1.5" stroke-linecap="round"/><circle cx="530.5" cy="791" r="7.8" fill="url(#kg1)" stroke="#707070" stroke-width=".8"/><path d="M531.46 791.67L535.91 794.79" stroke="#fff" stroke-width="1.5" stroke-linecap="round"/><circle cx="549.5" cy="791" r="7.8" fill="url(#kg0)" stroke="#2c2c2c" stroke-width=".8"/><path d="M550.25 790.1L553.74 785.94" stroke="#fff" stroke-width="1.5" stroke-linecap="round"/><circle cx="568.5" cy="791" r="7.8" fill="url(#kg0)" stroke="#2c2c2c" stroke-width=".8"/><path d="M568.99 789.94L571.29 785.02" stroke="#fff" stroke-width="1.5" stroke-linecap="round"/></svg>
<svg style="left:254.5px;top:786px" width="12" height="10" viewBox="0 0 12 10"><path d="M0.3 4.2C2.5 0.6 8.5 0.2 11.3 4.2" fill="none" stroke="#0a0a0a" stroke-width="1.5"/><path d="M0.8 5.2C3 2.2 8.6 2.2 11 5.2C8.6 8.6 3 8.6 0.8 5.2Z" fill="#0a0a0a"/><path d="M1.5 7.6C4 9.6 8 9.6 10.4 7.4" fill="none" stroke="#0a0a0a" stroke-width=".7"/><circle cx="5" cy="4.7" r="1.05" fill="#fff"/><path d="M8.3 5.2C8.3 6 7.7 6.9 6.8 7.3" stroke="#9a9a9a" stroke-width=".7" fill="none"/></svg>
<div class="a" style="left:275px;top:783.5px;width:78px;height:2.5px;background:#3a3c3a;border-radius:1px"></div>
<div class="a" style="left:275px;top:796.5px;width:78px;height:2.5px;background:#3a3c3a;border-radius:1px"></div>
<div class="a" style="left:275px;top:787.5px;width:78px;height:7.5px;background:linear-gradient(#ffffff 30%,#cfcfcf);border-radius:4px;box-shadow:0 0 0 .5px rgba(40,40,40,.6)"></div>
<div class="a" style="left:275px;top:787.5px;width:53.5px;height:7.5px;background:repeating-linear-gradient(90deg,#5ea8a6 0 1px,#84aebe 1px 2px);border-radius:4px 0 0 4px"><div class="a" style="left:0;top:0;right:0;bottom:0;background:linear-gradient(rgba(255,255,255,.28),rgba(255,255,255,0) 45%,rgba(0,0,0,.12));border-radius:4px 0 0 4px"></div></div>
<div class="a" style="left:325.5px;top:784.5px;width:6.5px;height:13px;background:linear-gradient(90deg,#8a8a8a,#f2f2f2 28%,#2e2e2e 42%,#2e2e2e 58%,#f2f2f2 72%,#8a8a8a);border:.5px solid #3a3a3a;border-radius:1.5px"></div>
<div class="a" style="left:0px;top:802px;width:584px;height:21px;background:linear-gradient(#646664,#5e605e);border-bottom:1px solid #3a3a3a;border-top:1px solid #6c6e6c"></div>
<svg style="left:17px;top:803.5px" width="16" height="18" viewBox="0 0 16 18"><defs><linearGradient id="pkbolt" x1="0" y1="0" x2="0" y2="1"><stop offset="0" stop-color="#ffa380"/><stop offset="1" stop-color="#f76a3c"/></linearGradient></defs><path d="M2.6 2.4Q8 0.2 13.4 2.4Q15.7 3.5 15.2 6.2Q14 11.5 9.5 16.5Q8 18 6.5 16.5Q2 11.5 0.8 6.2Q0.3 3.5 2.6 2.4Z" fill="url(#pkbolt)"/><path d="M9.2 3L5 9.3H7.8L6.3 14.5L11 7.6H8.2z" fill="#fff"/></svg>
<div class="t" style="left:39px;top:806px;font-size:12px;font-weight:bold;line-height:14px;color:#fff;text-shadow:0 1px 1px rgba(0,0,0,.6);letter-spacing:-.05px">4. E-Guitar.I</div>
<svg style="left:200px;top:802px" width="384" height="21" viewBox="200 802 384 21"><circle cx="217" cy="812" r="4" fill="url(#ledw)" stroke="#4a4a4a" stroke-width=".6"/><circle cx="238" cy="812" r="4" fill="url(#ledw)" stroke="#4a4a4a" stroke-width=".6"/><circle cx="374" cy="812" r="7.2" fill="url(#kg4)" stroke="#1a1a1a" stroke-width=".8"/><path d="M373.17 811.31L369.4 808.14" stroke="#fff" stroke-width="1.5" stroke-linecap="round"/><circle cx="396" cy="812" r="4" fill="url(#ledw)" stroke="#5a5a5a" stroke-width=".4"/><circle cx="416.5" cy="812" r="7.8" fill="url(#kg3)" stroke="#585a58" stroke-width=".8"/><path d="M416.5 810.83L416.5 805.4" stroke="#cfcfcf" stroke-width="1.5" stroke-linecap="round"/><circle cx="435.5" cy="812" r="7.8" fill="url(#kg3)" stroke="#585a58" stroke-width=".8"/><path d="M435.5 810.83L435.5 805.4" stroke="#cfcfcf" stroke-width="1.5" stroke-linecap="round"/><circle cx="454.5" cy="812" r="7.8" fill="url(#kg3)" stroke="#585a58" stroke-width=".8"/><path d="M454.5 810.83L454.5 805.4" stroke="#cfcfcf" stroke-width="1.5" stroke-linecap="round"/><circle cx="473.5" cy="812" r="7.8" fill="url(#kg3)" stroke="#585a58" stroke-width=".8"/><path d="M473.5 810.83L473.5 805.4" stroke="#cfcfcf" stroke-width="1.5" stroke-linecap="round"/><circle cx="492.5" cy="812" r="7.8" fill="url(#kg3)" stroke="#585a58" stroke-width=".8"/><path d="M492.5 810.83L492.5 805.4" stroke="#cfcfcf" stroke-width="1.5" stroke-linecap="round"/><circle cx="511.5" cy="812" r="7.8" fill="url(#kg3)" stroke="#585a58" stroke-width=".8"/><path d="M511.5 810.83L511.5 805.4" stroke="#cfcfcf" stroke-width="1.5" stroke-linecap="round"/><circle cx="530.5" cy="812" r="7.8" fill="url(#kg3)" stroke="#585a58" stroke-width=".8"/><path d="M530.5 810.83L530.5 805.4" stroke="#cfcfcf" stroke-width="1.5" stroke-linecap="round"/><circle cx="549.5" cy="812" r="7.8" fill="url(#kg3)" stroke="#585a58" stroke-width=".8"/><path d="M549.5 810.83L549.5 805.4" stroke="#cfcfcf" stroke-width="1.5" stroke-linecap="round"/><circle cx="568.5" cy="812" r="7.8" fill="url(#kg3)" stroke="#585a58" stroke-width=".8"/><path d="M568.5 810.83L568.5 805.4" stroke="#cfcfcf" stroke-width="1.5" stroke-linecap="round"/></svg>
<svg style="left:254.5px;top:807px" width="12" height="10" viewBox="0 0 12 10"><path d="M0.3 4.2C2.5 0.6 8.5 0.2 11.3 4.2" fill="none" stroke="#0a0a0a" stroke-width="1.5"/><path d="M0.8 5.2C3 2.2 8.6 2.2 11 5.2C8.6 8.6 3 8.6 0.8 5.2Z" fill="#0a0a0a"/><path d="M1.5 7.6C4 9.6 8 9.6 10.4 7.4" fill="none" stroke="#0a0a0a" stroke-width=".7"/><circle cx="5" cy="4.7" r="1.05" fill="#fff"/><path d="M8.3 5.2C8.3 6 7.7 6.9 6.8 7.3" stroke="#9a9a9a" stroke-width=".7" fill="none"/></svg>
<div class="a" style="left:275px;top:804.5px;width:78px;height:2.5px;background:#3a3c3a;border-radius:1px"></div>
<div class="a" style="left:275px;top:817.5px;width:78px;height:2.5px;background:#3a3c3a;border-radius:1px"></div>
<div class="a" style="left:275px;top:808.5px;width:78px;height:7.5px;background:linear-gradient(#ffffff 30%,#cfcfcf);border-radius:4px;box-shadow:0 0 0 .5px rgba(40,40,40,.6)"></div>
<div class="a" style="left:275px;top:808.5px;width:57.5px;height:7.5px;background:repeating-linear-gradient(90deg,#5ea8a6 0 1px,#84aebe 1px 2px);border-radius:4px 0 0 4px"><div class="a" style="left:0;top:0;right:0;bottom:0;background:linear-gradient(rgba(255,255,255,.28),rgba(255,255,255,0) 45%,rgba(0,0,0,.12));border-radius:4px 0 0 4px"></div></div>
<div class="a" style="left:329.5px;top:805.5px;width:6.5px;height:13px;background:linear-gradient(90deg,#8a8a8a,#f2f2f2 28%,#2e2e2e 42%,#2e2e2e 58%,#f2f2f2 72%,#8a8a8a);border:.5px solid #3a3a3a;border-radius:1.5px"></div>
<div class="a" style="left:0px;top:823px;width:584px;height:21px;background:linear-gradient(#646664,#5e605e);border-bottom:1px solid #3a3a3a;border-top:1px solid #6c6e6c"></div>
<svg style="left:17px;top:824.5px" width="16" height="18" viewBox="0 0 16 18"><defs><linearGradient id="pkbolt" x1="0" y1="0" x2="0" y2="1"><stop offset="0" stop-color="#ffa380"/><stop offset="1" stop-color="#f76a3c"/></linearGradient></defs><path d="M2.6 2.4Q8 0.2 13.4 2.4Q15.7 3.5 15.2 6.2Q14 11.5 9.5 16.5Q8 18 6.5 16.5Q2 11.5 0.8 6.2Q0.3 3.5 2.6 2.4Z" fill="url(#pkbolt)"/><path d="M9.2 3L5 9.3H7.8L6.3 14.5L11 7.6H8.2z" fill="#fff"/></svg>
<div class="t" style="left:39px;top:827px;font-size:12px;font-weight:bold;line-height:14px;color:#fff;text-shadow:0 1px 1px rgba(0,0,0,.6);letter-spacing:-.05px">5. E-Guitar.II</div>
<svg style="left:200px;top:823px" width="384" height="21" viewBox="200 823 384 21"><circle cx="217" cy="833" r="4" fill="url(#ledw)" stroke="#4a4a4a" stroke-width=".6"/><circle cx="238" cy="833" r="4" fill="url(#ledw)" stroke="#4a4a4a" stroke-width=".6"/><circle cx="374" cy="833" r="7.2" fill="url(#kg4)" stroke="#1a1a1a" stroke-width=".8"/><path d="M374.66 832.15L377.69 828.27" stroke="#fff" stroke-width="1.5" stroke-linecap="round"/><circle cx="396" cy="833" r="4" fill="url(#ledw)" stroke="#5a5a5a" stroke-width=".4"/><circle cx="416.5" cy="833" r="7.8" fill="url(#kg3)" stroke="#585a58" stroke-width=".8"/><path d="M416.5 831.83L416.5 826.4" stroke="#cfcfcf" stroke-width="1.5" stroke-linecap="round"/><circle cx="435.5" cy="833" r="7.8" fill="url(#kg3)" stroke="#585a58" stroke-width=".8"/><path d="M435.5 831.83L435.5 826.4" stroke="#cfcfcf" stroke-width="1.5" stroke-linecap="round"/><circle cx="454.5" cy="833" r="7.8" fill="url(#kg3)" stroke="#585a58" stroke-width=".8"/><path d="M454.5 831.83L454.5 826.4" stroke="#cfcfcf" stroke-width="1.5" stroke-linecap="round"/><circle cx="473.5" cy="833" r="7.8" fill="url(#kg3)" stroke="#585a58" stroke-width=".8"/><path d="M473.5 831.83L473.5 826.4" stroke="#cfcfcf" stroke-width="1.5" stroke-linecap="round"/><circle cx="492.5" cy="833" r="7.8" fill="url(#kg3)" stroke="#585a58" stroke-width=".8"/><path d="M492.5 831.83L492.5 826.4" stroke="#cfcfcf" stroke-width="1.5" stroke-linecap="round"/><circle cx="511.5" cy="833" r="7.8" fill="url(#kg3)" stroke="#585a58" stroke-width=".8"/><path d="M511.5 831.83L511.5 826.4" stroke="#cfcfcf" stroke-width="1.5" stroke-linecap="round"/><circle cx="530.5" cy="833" r="7.8" fill="url(#kg3)" stroke="#585a58" stroke-width=".8"/><path d="M530.5 831.83L530.5 826.4" stroke="#cfcfcf" stroke-width="1.5" stroke-linecap="round"/><circle cx="549.5" cy="833" r="7.8" fill="url(#kg3)" stroke="#585a58" stroke-width=".8"/><path d="M549.5 831.83L549.5 826.4" stroke="#cfcfcf" stroke-width="1.5" stroke-linecap="round"/><circle cx="568.5" cy="833" r="7.8" fill="url(#kg3)" stroke="#585a58" stroke-width=".8"/><path d="M568.5 831.83L568.5 826.4" stroke="#cfcfcf" stroke-width="1.5" stroke-linecap="round"/></svg>
<svg style="left:254.5px;top:828px" width="12" height="10" viewBox="0 0 12 10"><path d="M0.3 4.2C2.5 0.6 8.5 0.2 11.3 4.2" fill="none" stroke="#0a0a0a" stroke-width="1.5"/><path d="M0.8 5.2C3 2.2 8.6 2.2 11 5.2C8.6 8.6 3 8.6 0.8 5.2Z" fill="#0a0a0a"/><path d="M1.5 7.6C4 9.6 8 9.6 10.4 7.4" fill="none" stroke="#0a0a0a" stroke-width=".7"/><circle cx="5" cy="4.7" r="1.05" fill="#fff"/><path d="M8.3 5.2C8.3 6 7.7 6.9 6.8 7.3" stroke="#9a9a9a" stroke-width=".7" fill="none"/></svg>
<div class="a" style="left:275px;top:825.5px;width:78px;height:2.5px;background:#3a3c3a;border-radius:1px"></div>
<div class="a" style="left:275px;top:838.5px;width:78px;height:2.5px;background:#3a3c3a;border-radius:1px"></div>
<div class="a" style="left:275px;top:829.5px;width:78px;height:7.5px;background:linear-gradient(#ffffff 30%,#cfcfcf);border-radius:4px;box-shadow:0 0 0 .5px rgba(40,40,40,.6)"></div>
<div class="a" style="left:275px;top:829.5px;width:55.5px;height:7.5px;background:repeating-linear-gradient(90deg,#5ea8a6 0 1px,#84aebe 1px 2px);border-radius:4px 0 0 4px"><div class="a" style="left:0;top:0;right:0;bottom:0;background:linear-gradient(rgba(255,255,255,.28),rgba(255,255,255,0) 45%,rgba(0,0,0,.12));border-radius:4px 0 0 4px"></div></div>
<div class="a" style="left:327.5px;top:826.5px;width:6.5px;height:13px;background:linear-gradient(90deg,#8a8a8a,#f2f2f2 28%,#2e2e2e 42%,#2e2e2e 58%,#f2f2f2 72%,#8a8a8a);border:.5px solid #3a3a3a;border-radius:1.5px"></div>
<div class="a" style="left:0px;top:844px;width:584px;height:21px;background:linear-gradient(#646664,#5e605e);border-bottom:1px solid #3a3a3a;border-top:1px solid #6c6e6c"></div>
<svg style="left:17px;top:845.5px" width="16" height="18" viewBox="0 0 16 18"><defs><linearGradient id="pkbolt" x1="0" y1="0" x2="0" y2="1"><stop offset="0" stop-color="#ffa380"/><stop offset="1" stop-color="#f76a3c"/></linearGradient></defs><path d="M2.6 2.4Q8 0.2 13.4 2.4Q15.7 3.5 15.2 6.2Q14 11.5 9.5 16.5Q8 18 6.5 16.5Q2 11.5 0.8 6.2Q0.3 3.5 2.6 2.4Z" fill="url(#pkbolt)"/><path d="M9.2 3L5 9.3H7.8L6.3 14.5L11 7.6H8.2z" fill="#fff"/></svg>
<div class="t" style="left:39px;top:848px;font-size:12px;font-weight:bold;line-height:14px;color:#fff;text-shadow:0 1px 1px rgba(0,0,0,.6);letter-spacing:-.05px">6. E-Guitar.III</div>
<svg style="left:200px;top:844px" width="384" height="21" viewBox="200 844 384 21"><circle cx="217" cy="854" r="4" fill="url(#ledw)" stroke="#4a4a4a" stroke-width=".6"/><circle cx="238" cy="854" r="4" fill="url(#ledw)" stroke="#4a4a4a" stroke-width=".6"/><circle cx="374" cy="854" r="7.2" fill="url(#kg4)" stroke="#1a1a1a" stroke-width=".8"/><path d="M374 852.92L374 848" stroke="#fff" stroke-width="1.5" stroke-linecap="round"/><circle cx="396" cy="854" r="4" fill="url(#ledw)" stroke="#5a5a5a" stroke-width=".4"/><circle cx="416.5" cy="854" r="7.8" fill="url(#kg3)" stroke="#585a58" stroke-width=".8"/><path d="M416.5 852.83L416.5 847.4" stroke="#cfcfcf" stroke-width="1.5" stroke-linecap="round"/><circle cx="435.5" cy="854" r="7.8" fill="url(#kg3)" stroke="#585a58" stroke-width=".8"/><path d="M435.5 852.83L435.5 847.4" stroke="#cfcfcf" stroke-width="1.5" stroke-linecap="round"/><circle cx="454.5" cy="854" r="7.8" fill="url(#kg3)" stroke="#585a58" stroke-width=".8"/><path d="M454.5 852.83L454.5 847.4" stroke="#cfcfcf" stroke-width="1.5" stroke-linecap="round"/><circle cx="473.5" cy="854" r="7.8" fill="url(#kg3)" stroke="#585a58" stroke-width=".8"/><path d="M473.5 852.83L473.5 847.4" stroke="#cfcfcf" stroke-width="1.5" stroke-linecap="round"/><circle cx="492.5" cy="854" r="7.8" fill="url(#kg3)" stroke="#585a58" stroke-width=".8"/><path d="M492.5 852.83L492.5 847.4" stroke="#cfcfcf" stroke-width="1.5" stroke-linecap="round"/><circle cx="511.5" cy="854" r="7.8" fill="url(#kg3)" stroke="#585a58" stroke-width=".8"/><path d="M511.5 852.83L511.5 847.4" stroke="#cfcfcf" stroke-width="1.5" stroke-linecap="round"/><circle cx="530.5" cy="854" r="7.8" fill="url(#kg3)" stroke="#585a58" stroke-width=".8"/><path d="M530.5 852.83L530.5 847.4" stroke="#cfcfcf" stroke-width="1.5" stroke-linecap="round"/><circle cx="549.5" cy="854" r="7.8" fill="url(#kg3)" stroke="#585a58" stroke-width=".8"/><path d="M549.5 852.83L549.5 847.4" stroke="#cfcfcf" stroke-width="1.5" stroke-linecap="round"/><circle cx="568.5" cy="854" r="7.8" fill="url(#kg3)" stroke="#585a58" stroke-width=".8"/><path d="M568.5 852.83L568.5 847.4" stroke="#cfcfcf" stroke-width="1.5" stroke-linecap="round"/></svg>
<svg style="left:254.5px;top:849px" width="12" height="10" viewBox="0 0 12 10"><path d="M0.3 4.2C2.5 0.6 8.5 0.2 11.3 4.2" fill="none" stroke="#0a0a0a" stroke-width="1.5"/><path d="M0.8 5.2C3 2.2 8.6 2.2 11 5.2C8.6 8.6 3 8.6 0.8 5.2Z" fill="#0a0a0a"/><path d="M1.5 7.6C4 9.6 8 9.6 10.4 7.4" fill="none" stroke="#0a0a0a" stroke-width=".7"/><circle cx="5" cy="4.7" r="1.05" fill="#fff"/><path d="M8.3 5.2C8.3 6 7.7 6.9 6.8 7.3" stroke="#9a9a9a" stroke-width=".7" fill="none"/></svg>
<div class="a" style="left:275px;top:846.5px;width:78px;height:2.5px;background:#3a3c3a;border-radius:1px"></div>
<div class="a" style="left:275px;top:859.5px;width:78px;height:2.5px;background:#3a3c3a;border-radius:1px"></div>
<div class="a" style="left:275px;top:850.5px;width:78px;height:7.5px;background:linear-gradient(#ffffff 30%,#cfcfcf);border-radius:4px;box-shadow:0 0 0 .5px rgba(40,40,40,.6)"></div>
<div class="a" style="left:275px;top:850.5px;width:59.5px;height:7.5px;background:repeating-linear-gradient(90deg,#5ea8a6 0 1px,#84aebe 1px 2px);border-radius:4px 0 0 4px"><div class="a" style="left:0;top:0;right:0;bottom:0;background:linear-gradient(rgba(255,255,255,.28),rgba(255,255,255,0) 45%,rgba(0,0,0,.12));border-radius:4px 0 0 4px"></div></div>
<div class="a" style="left:331.5px;top:847.5px;width:6.5px;height:13px;background:linear-gradient(90deg,#8a8a8a,#f2f2f2 28%,#2e2e2e 42%,#2e2e2e 58%,#f2f2f2 72%,#8a8a8a);border:.5px solid #3a3a3a;border-radius:1.5px"></div>
<div class="a" style="left:0px;top:865px;width:584px;height:21px;background:linear-gradient(#646664,#5e605e);border-bottom:1px solid #3a3a3a;border-top:1px solid #6c6e6c"></div>
<svg style="left:17px;top:866.5px" width="16" height="18" viewBox="0 0 16 18"><defs><linearGradient id="pkbolt" x1="0" y1="0" x2="0" y2="1"><stop offset="0" stop-color="#ffa380"/><stop offset="1" stop-color="#f76a3c"/></linearGradient></defs><path d="M2.6 2.4Q8 0.2 13.4 2.4Q15.7 3.5 15.2 6.2Q14 11.5 9.5 16.5Q8 18 6.5 16.5Q2 11.5 0.8 6.2Q0.3 3.5 2.6 2.4Z" fill="url(#pkbolt)"/><path d="M9.2 3L5 9.3H7.8L6.3 14.5L11 7.6H8.2z" fill="#fff"/></svg>
<div class="t" style="left:39px;top:869px;font-size:12px;font-weight:bold;line-height:14px;color:#fff;text-shadow:0 1px 1px rgba(0,0,0,.6);letter-spacing:-.05px">7. E-Guitar.IV</div>
<svg style="left:200px;top:865px" width="384" height="21" viewBox="200 865 384 21"><circle cx="217" cy="875" r="4" fill="url(#ledw)" stroke="#4a4a4a" stroke-width=".6"/><circle cx="238" cy="875" r="4" fill="url(#ledw)" stroke="#4a4a4a" stroke-width=".6"/><circle cx="374" cy="875" r="7.2" fill="url(#kg4)" stroke="#1a1a1a" stroke-width=".8"/><path d="M374 873.92L374 869" stroke="#fff" stroke-width="1.5" stroke-linecap="round"/><circle cx="396" cy="875" r="4" fill="url(#ledw)" stroke="#5a5a5a" stroke-width=".4"/><circle cx="416.5" cy="875" r="7.8" fill="url(#kg3)" stroke="#585a58" stroke-width=".8"/><path d="M416.5 873.83L416.5 868.4" stroke="#cfcfcf" stroke-width="1.5" stroke-linecap="round"/><circle cx="435.5" cy="875" r="7.8" fill="url(#kg3)" stroke="#585a58" stroke-width=".8"/><path d="M435.5 873.83L435.5 868.4" stroke="#cfcfcf" stroke-width="1.5" stroke-linecap="round"/><circle cx="454.5" cy="875" r="7.8" fill="url(#kg3)" stroke="#585a58" stroke-width=".8"/><path d="M454.5 873.83L454.5 868.4" stroke="#cfcfcf" stroke-width="1.5" stroke-linecap="round"/><circle cx="473.5" cy="875" r="7.8" fill="url(#kg3)" stroke="#585a58" stroke-width=".8"/><path d="M473.5 873.83L473.5 868.4" stroke="#cfcfcf" stroke-width="1.5" stroke-linecap="round"/><circle cx="492.5" cy="875" r="7.8" fill="url(#kg3)" stroke="#585a58" stroke-width=".8"/><path d="M492.5 873.83L492.5 868.4" stroke="#cfcfcf" stroke-width="1.5" stroke-linecap="round"/><circle cx="511.5" cy="875" r="7.8" fill="url(#kg3)" stroke="#585a58" stroke-width=".8"/><path d="M511.5 873.83L511.5 868.4" stroke="#cfcfcf" stroke-width="1.5" stroke-linecap="round"/><circle cx="530.5" cy="875" r="7.8" fill="url(#kg3)" stroke="#585a58" stroke-width=".8"/><path d="M530.5 873.83L530.5 868.4" stroke="#cfcfcf" stroke-width="1.5" stroke-linecap="round"/><circle cx="549.5" cy="875" r="7.8" fill="url(#kg3)" stroke="#585a58" stroke-width=".8"/><path d="M549.5 873.83L549.5 868.4" stroke="#cfcfcf" stroke-width="1.5" stroke-linecap="round"/><circle cx="568.5" cy="875" r="7.8" fill="url(#kg3)" stroke="#585a58" stroke-width=".8"/><path d="M568.5 873.83L568.5 868.4" stroke="#cfcfcf" stroke-width="1.5" stroke-linecap="round"/></svg>
<div class="a" style="left:275px;top:867.5px;width:78px;height:2.5px;background:#3a3c3a;border-radius:1px"></div>
<div class="a" style="left:275px;top:880.5px;width:78px;height:2.5px;background:#3a3c3a;border-radius:1px"></div>
<div class="a" style="left:275px;top:871.5px;width:78px;height:7.5px;background:linear-gradient(#ffffff 30%,#cfcfcf);border-radius:4px;box-shadow:0 0 0 .5px rgba(40,40,40,.6)"></div>
<div class="a" style="left:275px;top:871.5px;width:61px;height:7.5px;background:repeating-linear-gradient(90deg,#5ea8a6 0 1px,#84aebe 1px 2px);border-radius:4px 0 0 4px"><div class="a" style="left:0;top:0;right:0;bottom:0;background:linear-gradient(rgba(255,255,255,.28),rgba(255,255,255,0) 45%,rgba(0,0,0,.12));border-radius:4px 0 0 4px"></div></div>
<div class="a" style="left:333px;top:868.5px;width:6.5px;height:13px;background:linear-gradient(90deg,#8a8a8a,#f2f2f2 28%,#2e2e2e 42%,#2e2e2e 58%,#f2f2f2 72%,#8a8a8a);border:.5px solid #3a3a3a;border-radius:1.5px"></div>
<div class="a" style="left:0px;top:886px;width:584px;height:21px;background:linear-gradient(#646664,#5e605e);border-bottom:1px solid #3a3a3a;border-top:1px solid #6c6e6c"></div>
<svg style="left:17px;top:887.5px" width="16" height="18" viewBox="0 0 16 18"><defs><linearGradient id="pkbass" x1="0" y1="0" x2="0" y2="1"><stop offset="0" stop-color="#ffc040"/><stop offset="1" stop-color="#f08a10"/></linearGradient></defs><path d="M2.6 2.4Q8 0.2 13.4 2.4Q15.7 3.5 15.2 6.2Q14 11.5 9.5 16.5Q8 18 6.5 16.5Q2 11.5 0.8 6.2Q0.3 3.5 2.6 2.4Z" fill="url(#pkbass)"/><text x="8" y="11.5" text-anchor="middle" font-family='"Liberation Sans", "DejaVu Sans", sans-serif' font-size="9.5" font-weight="bold" fill="#fff">B</text></svg>
<div class="t" style="left:39px;top:890px;font-size:12px;font-weight:bold;line-height:14px;color:#fff;text-shadow:0 1px 1px rgba(0,0,0,.6);letter-spacing:-.05px">8. Bass</div>
<svg style="left:200px;top:886px" width="384" height="21" viewBox="200 886 384 21"><circle cx="217" cy="896" r="4" fill="url(#ledw)" stroke="#4a4a4a" stroke-width=".6"/><circle cx="238" cy="896" r="4" fill="url(#ledw)" stroke="#4a4a4a" stroke-width=".6"/><circle cx="374" cy="896" r="7.2" fill="url(#kg4)" stroke="#1a1a1a" stroke-width=".8"/><path d="M374 894.92L374 890" stroke="#fff" stroke-width="1.5" stroke-linecap="round"/><circle cx="396" cy="896" r="4.1" fill="url(#ledo)" stroke="#7a4a18" stroke-width=".3"/><circle cx="416.5" cy="896" r="7.8" fill="url(#kg0)" stroke="#2c2c2c" stroke-width=".8"/><path d="M416.9 894.9L418.76 889.8" stroke="#fff" stroke-width="1.5" stroke-linecap="round"/><circle cx="435.5" cy="896" r="7.8" fill="url(#kg1)" stroke="#707070" stroke-width=".8"/><path d="M434.33 896L428.9 896" stroke="#fff" stroke-width="1.5" stroke-linecap="round"/><circle cx="454.5" cy="896" r="7.8" fill="url(#kg0)" stroke="#2c2c2c" stroke-width=".8"/><path d="M455.17 895.04L458.29 890.59" stroke="#fff" stroke-width="1.5" stroke-linecap="round"/><circle cx="473.5" cy="896" r="7.8" fill="url(#kg2)" stroke="#4a4a4a" stroke-width=".8"/><path d="M473.5 894.83L473.5 889.4" stroke="#fff" stroke-width="1.5" stroke-linecap="round"/><circle cx="492.5" cy="896" r="7.8" fill="url(#kg1)" stroke="#707070" stroke-width=".8"/><path d="M493.4 895.25L497.56 891.76" stroke="#fff" stroke-width="1.5" stroke-linecap="round"/><circle cx="511.5" cy="896" r="7.8" fill="url(#kg0)" stroke="#2c2c2c" stroke-width=".8"/><path d="M512.17 895.04L515.29 890.59" stroke="#fff" stroke-width="1.5" stroke-linecap="round"/><circle cx="530.5" cy="896" r="7.8" fill="url(#kg1)" stroke="#707070" stroke-width=".8"/><path d="M531.09 894.99L533.8 890.28" stroke="#fff" stroke-width="1.5" stroke-linecap="round"/><circle cx="549.5" cy="896" r="7.8" fill="url(#kg0)" stroke="#2c2c2c" stroke-width=".8"/><path d="M550.25 895.1L553.74 890.94" stroke="#fff" stroke-width="1.5" stroke-linecap="round"/><circle cx="568.5" cy="896" r="7.8" fill="url(#kg0)" stroke="#2c2c2c" stroke-width=".8"/><path d="M568.99 894.94L571.29 890.02" stroke="#fff" stroke-width="1.5" stroke-linecap="round"/></svg>
<svg style="left:254.5px;top:891px" width="12" height="10" viewBox="0 0 12 10"><path d="M0.3 4.2C2.5 0.6 8.5 0.2 11.3 4.2" fill="none" stroke="#0a0a0a" stroke-width="1.5"/><path d="M0.8 5.2C3 2.2 8.6 2.2 11 5.2C8.6 8.6 3 8.6 0.8 5.2Z" fill="#0a0a0a"/><path d="M1.5 7.6C4 9.6 8 9.6 10.4 7.4" fill="none" stroke="#0a0a0a" stroke-width=".7"/><circle cx="5" cy="4.7" r="1.05" fill="#fff"/><path d="M8.3 5.2C8.3 6 7.7 6.9 6.8 7.3" stroke="#9a9a9a" stroke-width=".7" fill="none"/></svg>
<div class="a" style="left:275px;top:888.5px;width:78px;height:2.5px;background:#3a3c3a;border-radius:1px"></div>
<div class="a" style="left:275px;top:901.5px;width:78px;height:2.5px;background:#3a3c3a;border-radius:1px"></div>
<div class="a" style="left:275px;top:892.5px;width:78px;height:7.5px;background:linear-gradient(#ffffff 30%,#cfcfcf);border-radius:4px;box-shadow:0 0 0 .5px rgba(40,40,40,.6)"></div>
<div class="a" style="left:275px;top:892.5px;width:56.5px;height:7.5px;background:repeating-linear-gradient(90deg,#5ea8a6 0 1px,#84aebe 1px 2px);border-radius:4px 0 0 4px"><div class="a" style="left:0;top:0;right:0;bottom:0;background:linear-gradient(rgba(255,255,255,.28),rgba(255,255,255,0) 45%,rgba(0,0,0,.12));border-radius:4px 0 0 4px"></div></div>
<div class="a" style="left:328.5px;top:889.5px;width:6.5px;height:13px;background:linear-gradient(90deg,#8a8a8a,#f2f2f2 28%,#2e2e2e 42%,#2e2e2e 58%,#f2f2f2 72%,#8a8a8a);border:.5px solid #3a3a3a;border-radius:1.5px"></div>
<div class="a" style="left:0px;top:907px;width:584px;height:21px;background:linear-gradient(#646664,#5e605e);border-bottom:1px solid #3a3a3a;border-top:1px solid #6c6e6c"></div>
<svg style="left:16px;top:910.5px" width="20" height="14" viewBox="0 0 20 14"><ellipse cx="10" cy="7" rx="9.3" ry="5.3" transform="rotate(8 10 7)" fill="#e6c66a"/><ellipse cx="9.5" cy="6.3" rx="5.5" ry="2.6" transform="rotate(8 10 7)" fill="#f4dc92"/></svg>
<div class="t" style="left:39px;top:911px;font-size:12px;font-weight:bold;line-height:14px;color:#fff;text-shadow:0 1px 1px rgba(0,0,0,.6);letter-spacing:-.05px">9. Drums</div>
<svg style="left:200px;top:907px" width="384" height="21" viewBox="200 907 384 21"><circle cx="217" cy="917" r="4" fill="url(#ledw)" stroke="#4a4a4a" stroke-width=".6"/><circle cx="238" cy="917" r="4" fill="url(#ledw)" stroke="#4a4a4a" stroke-width=".6"/><circle cx="374" cy="917" r="7.2" fill="url(#kg4)" stroke="#1a1a1a" stroke-width=".8"/><path d="M374 915.92L374 911" stroke="#fff" stroke-width="1.5" stroke-linecap="round"/><circle cx="396" cy="917" r="4" fill="url(#ledw)" stroke="#5a5a5a" stroke-width=".4"/><circle cx="416.5" cy="917" r="7.8" fill="url(#kg3)" stroke="#585a58" stroke-width=".8"/><path d="M416.5 915.83L416.5 910.4" stroke="#cfcfcf" stroke-width="1.5" stroke-linecap="round"/><circle cx="435.5" cy="917" r="7.8" fill="url(#kg3)" stroke="#585a58" stroke-width=".8"/><path d="M435.5 915.83L435.5 910.4" stroke="#cfcfcf" stroke-width="1.5" stroke-linecap="round"/><circle cx="454.5" cy="917" r="7.8" fill="url(#kg3)" stroke="#585a58" stroke-width=".8"/><path d="M454.5 915.83L454.5 910.4" stroke="#cfcfcf" stroke-width="1.5" stroke-linecap="round"/><circle cx="473.5" cy="917" r="7.8" fill="url(#kg3)" stroke="#585a58" stroke-width=".8"/><path d="M473.5 915.83L473.5 910.4" stroke="#cfcfcf" stroke-width="1.5" stroke-linecap="round"/><circle cx="492.5" cy="917" r="7.8" fill="url(#kg3)" stroke="#585a58" stroke-width=".8"/><path d="M492.5 915.83L492.5 910.4" stroke="#cfcfcf" stroke-width="1.5" stroke-linecap="round"/><circle cx="511.5" cy="917" r="7.8" fill="url(#kg3)" stroke="#585a58" stroke-width=".8"/><path d="M511.5 915.83L511.5 910.4" stroke="#cfcfcf" stroke-width="1.5" stroke-linecap="round"/><circle cx="530.5" cy="917" r="7.8" fill="url(#kg3)" stroke="#585a58" stroke-width=".8"/><path d="M530.5 915.83L530.5 910.4" stroke="#cfcfcf" stroke-width="1.5" stroke-linecap="round"/><circle cx="549.5" cy="917" r="7.8" fill="url(#kg3)" stroke="#585a58" stroke-width=".8"/><path d="M549.5 915.83L549.5 910.4" stroke="#cfcfcf" stroke-width="1.5" stroke-linecap="round"/><circle cx="568.5" cy="917" r="7.8" fill="url(#kg3)" stroke="#585a58" stroke-width=".8"/><path d="M568.5 915.83L568.5 910.4" stroke="#cfcfcf" stroke-width="1.5" stroke-linecap="round"/></svg>
<svg style="left:254.5px;top:912px" width="12" height="10" viewBox="0 0 12 10"><path d="M0.3 4.2C2.5 0.6 8.5 0.2 11.3 4.2" fill="none" stroke="#0a0a0a" stroke-width="1.5"/><path d="M0.8 5.2C3 2.2 8.6 2.2 11 5.2C8.6 8.6 3 8.6 0.8 5.2Z" fill="#0a0a0a"/><path d="M1.5 7.6C4 9.6 8 9.6 10.4 7.4" fill="none" stroke="#0a0a0a" stroke-width=".7"/><circle cx="5" cy="4.7" r="1.05" fill="#fff"/><path d="M8.3 5.2C8.3 6 7.7 6.9 6.8 7.3" stroke="#9a9a9a" stroke-width=".7" fill="none"/></svg>
<div class="a" style="left:275px;top:909.5px;width:78px;height:2.5px;background:#3a3c3a;border-radius:1px"></div>
<div class="a" style="left:275px;top:922.5px;width:78px;height:2.5px;background:#3a3c3a;border-radius:1px"></div>
<div class="a" style="left:275px;top:913.5px;width:78px;height:7.5px;background:linear-gradient(#ffffff 30%,#cfcfcf);border-radius:4px;box-shadow:0 0 0 .5px rgba(40,40,40,.6)"></div>
<div class="a" style="left:275px;top:913.5px;width:60px;height:7.5px;background:repeating-linear-gradient(90deg,#5ea8a6 0 1px,#84aebe 1px 2px);border-radius:4px 0 0 4px"><div class="a" style="left:0;top:0;right:0;bottom:0;background:linear-gradient(rgba(255,255,255,.28),rgba(255,255,255,0) 45%,rgba(0,0,0,.12));border-radius:4px 0 0 4px"></div></div>
<div class="a" style="left:332px;top:910.5px;width:6.5px;height:13px;background:linear-gradient(90deg,#8a8a8a,#f2f2f2 28%,#2e2e2e 42%,#2e2e2e 58%,#f2f2f2 72%,#8a8a8a);border:.5px solid #3a3a3a;border-radius:1.5px"></div>
<div class="a" style="left:0px;top:928px;width:584px;height:21px;background:linear-gradient(#757775,#676967);border:1px solid #929492;border-bottom-color:#3a3a3a"></div>
<div class="t" style="left:11px;top:933px;font-size:12px;font-weight:bold;line-height:14px;color:#fff;text-shadow:0 1px 1px rgba(0,0,0,.6)">Master</div>
<svg style="left:186px;top:930px" width="18" height="18" viewBox="0 0 18 18"><path d="M3 16.5L13 2.5M5.8 16.5L15.5 4" stroke="#d8d8d8" stroke-width="1.3" fill="none"/><path d="M2.5 17.2L5.5 13" stroke="#e8e8e8" stroke-width="2"/></svg>
<svg style="left:200px;top:928px" width="384" height="21" viewBox="200 928 384 21"><circle cx="218" cy="938" r="7.2" fill="url(#kg4)" stroke="#1a1a1a" stroke-width=".8"/><path d="M218 936.92L218 932" stroke="#fff" stroke-width="1.5" stroke-linecap="round"/><circle cx="374" cy="938" r="7.2" fill="url(#kg4)" stroke="#1a1a1a" stroke-width=".8"/><path d="M374 936.92L374 932" stroke="#fff" stroke-width="1.5" stroke-linecap="round"/></svg>
<div class="a" style="left:275px;top:930.5px;width:78px;height:2.5px;background:#3a3c3a;border-radius:1px"></div>
<div class="a" style="left:275px;top:943.5px;width:78px;height:2.5px;background:#3a3c3a;border-radius:1px"></div>
<div class="a" style="left:275px;top:934.5px;width:78px;height:7.5px;background:linear-gradient(#ffffff 30%,#cfcfcf);border-radius:4px;box-shadow:0 0 0 .5px rgba(40,40,40,.6)"></div>
<div class="a" style="left:275px;top:934.5px;width:61px;height:7.5px;background:repeating-linear-gradient(90deg,#f08a14 0 1px,#f8a43a 1px 2px);border-radius:4px 0 0 4px"><div class="a" style="left:0;top:0;right:0;bottom:0;background:linear-gradient(rgba(255,255,255,.28),rgba(255,255,255,0) 45%,rgba(0,0,0,.12));border-radius:4px 0 0 4px"></div></div>
<div class="a" style="left:333px;top:931.5px;width:6.5px;height:13px;background:linear-gradient(90deg,#8a8a8a,#f2f2f2 28%,#2e2e2e 42%,#2e2e2e 58%,#f2f2f2 72%,#8a8a8a);border:.5px solid #3a3a3a;border-radius:1.5px"></div>
<div class="a" style="left:0px;top:949px;width:585px;height:15px;background:#4a4c4a;border-top:1px solid #333"></div>
<div class="t" style="left:581.5px;top:726.5px;width:30px;text-align:center;font-size:10px;line-height:12px;color:#f0f0f0">1</div>
<div class="t" style="left:653.5px;top:726.5px;width:30px;text-align:center;font-size:10px;line-height:12px;color:#f0f0f0">4</div>
<div class="t" style="left:749.5px;top:726.5px;width:30px;text-align:center;font-size:10px;line-height:12px;color:#f0f0f0">8</div>
<div class="t" style="left:845.5px;top:726.5px;width:30px;text-align:center;font-size:10px;line-height:12px;color:#f0f0f0">12</div>
<div class="t" style="left:941.5px;top:726.5px;width:30px;text-align:center;font-size:10px;line-height:12px;color:#f0f0f0">16</div>
<div class="t" style="left:1037.5px;top:726.5px;width:30px;text-align:center;font-size:10px;line-height:12px;color:#f0f0f0">20</div>
<div class="t" style="left:1133.5px;top:726.5px;width:30px;text-align:center;font-size:10px;line-height:12px;color:#f0f0f0">24</div>
<div class="t" style="left:1229.5px;top:726.5px;width:30px;text-align:center;font-size:10px;line-height:12px;color:#f0f0f0">28</div>
<svg style="left:1253px;top:722px" width="10" height="7" viewBox="0 -1 10 7"><rect x="0" y="0" width="1" height="1" fill="#2a2a2a"/><rect x="0" y="1.7" width="1" height="1" fill="#2a2a2a"/><rect x="0" y="3.4" width="1" height="1" fill="#2a2a2a"/><rect x="0" y="5.1" width="1" height="1" fill="#2a2a2a"/><rect x="2" y="0" width="1" height="1" fill="#2a2a2a"/><rect x="2" y="1.7" width="1" height="1" fill="#2a2a2a"/><rect x="2" y="3.4" width="1" height="1" fill="#2a2a2a"/><rect x="2" y="5.1" width="1" height="1" fill="#2a2a2a"/><rect x="4" y="0" width="1" height="1" fill="#2a2a2a"/><rect x="4" y="1.7" width="1" height="1" fill="#2a2a2a"/><rect x="4" y="3.4" width="1" height="1" fill="#2a2a2a"/><rect x="4" y="5.1" width="1" height="1" fill="#2a2a2a"/><rect x="6" y="0" width="1" height="1" fill="#2a2a2a"/><rect x="6" y="1.7" width="1" height="1" fill="#2a2a2a"/><rect x="6" y="3.4" width="1" height="1" fill="#2a2a2a"/><rect x="6" y="5.1" width="1" height="1" fill="#2a2a2a"/><rect x="8" y="0" width="1" height="1" fill="#2a2a2a"/><rect x="8" y="1.7" width="1" height="1" fill="#2a2a2a"/><rect x="8" y="3.4" width="1" height="1" fill="#2a2a2a"/><rect x="8" y="5.1" width="1" height="1" fill="#2a2a2a"/><rect x="10" y="0" width="1" height="1" fill="#2a2a2a"/><rect x="10" y="1.7" width="1" height="1" fill="#2a2a2a"/><rect x="10" y="3.4" width="1" height="1" fill="#2a2a2a"/><rect x="10" y="5.1" width="1" height="1" fill="#2a2a2a"/></svg>
<div class="a" style="left:585px;top:739px;width:667px;height:189px;overflow:hidden;background:#5f615f"><div class="a" style="left:0;top:0px;width:667px;height:20px;background:#777977"></div><div class="a" style="left:96px;top:0px;width:576px;height:20px;background:linear-gradient(#a6e6cc,#74d9b0 90%)"></div><div class="a" style="left:0;top:20px;width:667px;height:1px;background:#2e2e2e"></div><div class="a" style="left:0;top:21px;width:667px;height:20px;background:#5f615f"></div><div class="a" style="left:0px;top:21px;width:672px;height:20px;background:linear-gradient(#ff9070,#ff4c18 90%)"></div><div class="a" style="left:0;top:41px;width:667px;height:1px;background:#2e2e2e"></div><div class="a" style="left:0;top:42px;width:667px;height:20px;background:#5f615f"></div><div class="a" style="left:0px;top:42px;width:288px;height:20px;background:linear-gradient(#ff9070,#ff4c18 90%)"></div><div class="a" style="left:0;top:62px;width:667px;height:1px;background:#2e2e2e"></div><div class="a" style="left:0;top:63px;width:667px;height:20px;background:#5f615f"></div><div class="a" style="left:48px;top:63px;width:48px;height:20px;background:linear-gradient(#ea8c7e,#d8472a 90%)"></div><div class="a" style="left:288px;top:63px;width:384px;height:20px;background:linear-gradient(#ea8c7e,#d8472a 90%)"></div><div class="a" style="left:0;top:83px;width:667px;height:1px;background:#2e2e2e"></div><div class="a" style="left:0;top:84px;width:667px;height:20px;background:#5f615f"></div><div class="a" style="left:192px;top:84px;width:144px;height:20px;background:linear-gradient(#ea8c7e,#d8472a 90%)"></div><div class="a" style="left:384px;top:84px;width:288px;height:20px;background:linear-gradient(#ea8c7e,#d8472a 90%)"></div><div class="a" style="left:0;top:104px;width:667px;height:1px;background:#2e2e2e"></div><div class="a" style="left:0;top:105px;width:667px;height:20px;background:#5f615f"></div><div class="a" style="left:456px;top:105px;width:216px;height:20px;background:linear-gradient(#ea8c7e,#d8472a 90%)"></div><div class="a" style="left:0;top:125px;width:667px;height:1px;background:#2e2e2e"></div><div class="a" style="left:0;top:126px;width:667px;height:20px;background:#5f615f"></div><div class="a" style="left:0;top:146px;width:667px;height:1px;background:#2e2e2e"></div><div class="a" style="left:0;top:147px;width:667px;height:20px;background:#5f615f"></div><div class="a" style="left:264px;top:147px;width:408px;height:20px;background:linear-gradient(#ffdc58,#ffc000 65%)"></div><div class="a" style="left:0;top:167px;width:667px;height:1px;background:#2e2e2e"></div><div class="a" style="left:0;top:168px;width:667px;height:20px;background:#5f615f"></div><div class="a" style="left:168px;top:168px;width:504px;height:20px;background:linear-gradient(#a8d6f4,#62b2ea 90%)"></div><div class="a" style="left:0;top:188px;width:667px;height:1px;background:#2e2e2e"></div><div class="a" style="left:0;top:0;width:667px;height:189px;background:repeating-linear-gradient(90deg,rgba(205,205,205,.27) 0 1px,rgba(255,255,255,0) 1px 24px)"></div><div class="a" style="left:437px;top:4px;width:15px;height:13px;background:#2b4138"></div></div>
<div class="a" style="left:1252px;top:739px;width:15px;height:189px;background:#4c4e4c;border-left:1px solid #2c2c2c"></div>
<div class="a" style="left:1253px;top:739px;width:14px;height:15px;background:#5f615f;border-bottom:1px solid #2c2c2c"></div>
<div class="a" style="left:1253px;top:754px;width:14px;height:142px;background:linear-gradient(90deg,#8f918f,#858785);border:1px solid #3a3a3a"></div>
<div class="a" style="left:1253px;top:912px;width:14px;height:16px;background:#5f615f;border-top:1px solid #2c2c2c"></div>
<svg style="left:1253px;top:739px" width="14" height="189" viewBox="0 0 14 189"><polygon points="3.2,9.78 10.8,9.78 7,4.46" fill="#f0f0f0"/><polygon points="3.2,179.22 10.8,179.22 7,184.54" fill="#f0f0f0"/></svg>
<div class="a" style="left:585px;top:928px;width:682px;height:21px;background:linear-gradient(#696b69,#5e605e);border-top:1px solid #858785;border-bottom:1px solid #2e2e2e;overflow:hidden"></div>
<div class="a" style="left:591px;top:932px;width:13px;height:13px;border:1px solid #e0e0e0;overflow:hidden"><div class="t" style="left:0;top:0;width:11px;text-align:center;font-size:10px;line-height:11px;color:#f0f0f0">A</div></div>
<div class="t" style="left:608px;top:933.5px;font-size:9.5px;line-height:12px;color:#ececec;letter-spacing:.25px">Intro</div>
<div class="a" style="left:687px;top:932px;width:13px;height:13px;border:1px solid #e0e0e0;overflow:hidden"><div class="t" style="left:0;top:0;width:11px;text-align:center;font-size:10px;line-height:11px;color:#f0f0f0">B</div></div>
<div class="t" style="left:704px;top:933.5px;font-size:9.5px;line-height:12px;color:#ececec;letter-spacing:.25px">Verse 1</div>
<div class="a" style="left:1071px;top:932px;width:13px;height:13px;border:1px solid #e0e0e0;overflow:hidden"><div class="t" style="left:0;top:0;width:11px;text-align:center;font-size:10px;line-height:11px;color:#f0f0f0">C</div></div>
<div class="t" style="left:1088px;top:933.5px;font-size:9.5px;line-height:12px;color:#ececec;letter-spacing:.25px">Chorus 1</div>
<div class="a" style="left:1263px;top:932px;width:13px;height:13px;border:1px solid #e0e0e0;overflow:hidden"><div class="t" style="left:0;top:0;width:11px;text-align:center;font-size:10px;line-height:11px;color:#f0f0f0">D</div></div>
<div class="a" style="left:585px;top:949px;width:682px;height:15px;background:#5a5c5a;border-top:1px solid #2e2e2e"></div>
<div class="a" style="left:585px;top:950px;width:15px;height:14px;background:#5f615f;border-right:1px solid #2c2c2c"></div>
<div class="a" style="left:600px;top:950px;width:188px;height:14px;background:linear-gradient(#8f918f,#848684);border:1px solid #3a3a3a"></div>
<div class="a" style="left:1236px;top:950px;width:16px;height:14px;background:#5f615f;border-left:1px solid #2c2c2c;border-right:1px solid #2c2c2c"></div>
<svg style="left:585px;top:950px" width="667" height="14" viewBox="0 0 667 14"><polygon points="9.28,3.2 9.28,10.8 3.96,7" fill="#f0f0f0"/><polygon points="656.72,3.2 656.72,10.8 662.04,7" fill="#f0f0f0"/></svg>
<svg style="left:1253px;top:949px" width="14" height="15" viewBox="0 0 14 15"><path d="M4 7V4.8a3 3 0 0 1 6 0V7" fill="none" stroke="#c8a030" stroke-width="1.6"/><rect x="1.5" y="6.5" width="11" height="8" rx="1" fill="#f0b820" stroke="#b07c08" stroke-width=".8"/><rect x="6.3" y="9" width="1.4" height="3" fill="#8a5c00"/></svg>
<div class="a" style="left:0px;top:964px;width:1267px;height:20px;background:#ececec;border-top:1px solid #f8f8f8"></div>
<div class="t" style="left:27px;top:969px;font-size:11px;line-height:13px;color:#141414">Page 1/4</div>
<div class="t" style="left:141px;top:969px;font-size:11px;line-height:13px;color:#141414">Voc.</div>
<div class="t" style="left:220px;top:969px;font-size:11px;line-height:13px;color:#141414">Bar 019 : 094</div>
<div class="t" style="left:344px;top:969px;font-size:11px;line-height:13px;color:#141414">4:4</div>
<div class="t" style="left:415px;top:969px;font-size:11px;line-height:13px;color:#141414">0'39/3'21</div>
<div class="t" style="left:516px;top:969px;font-size:11px;line-height:13px;color:#141414">G</div>
<div class="t" style="left:549px;top:969px;font-size:11px;line-height:13px;color:#141414">Tempo: q = 112</div>
<div class="t" style="left:970px;top:969px;font-size:11px;line-height:13px;color:#141414">Lyrics</div>
<div class="t" style="left:698.5px;top:969.5px;font-size:11px;line-height:13px;color:#141414;font-family:"Liberation Mono","DejaVu Sans Mono",monospace;font-size:10px;letter-spacing:-.3px">0%</div>
<div class="t" style="left:646px;top:969px;font-size:11px;line-height:13px;color:#141414;font-weight:bold;letter-spacing:.8px;transform:scaleX(1.15);transform-origin:0 0">RSE</div>
<div class="a" style="left:102px;top:968px;width:1px;height:13px;background:#9a9a9a"></div>
<div class="a" style="left:203px;top:968px;width:1px;height:13px;background:#9a9a9a"></div>
<div class="a" style="left:305px;top:968px;width:1px;height:13px;background:#9a9a9a"></div>
<div class="a" style="left:387px;top:968px;width:1px;height:13px;background:#9a9a9a"></div>
<div class="a" style="left:489px;top:968px;width:1px;height:13px;background:#9a9a9a"></div>
<div class="a" style="left:535px;top:968px;width:1px;height:13px;background:#9a9a9a"></div>
<div class="a" style="left:637px;top:968px;width:1px;height:13px;background:#9a9a9a"></div>
<div class="a" style="left:721px;top:968px;width:1px;height:13px;background:#9a9a9a"></div>
<div class="a" style="left:328px;top:971px;width:8px;height:8px;border-radius:50%;background:radial-gradient(circle at 45% 35%,#7ee04a,#1c9a10 70%,#0c6a08)"></div>
<div class="a" style="left:503px;top:971px;width:8px;height:8px;border-radius:50%;background:radial-gradient(circle at 45% 35%,#7ee04a,#1c9a10 70%,#0c6a08)"></div>
<svg style="left:1250px;top:968px" width="16" height="16" viewBox="0 0 16 16"><path d="M15 3L3 15M15 7L7 15M15 11L11 15" stroke="#9a9a9a" stroke-width="1"/></svg>
</body></html>
